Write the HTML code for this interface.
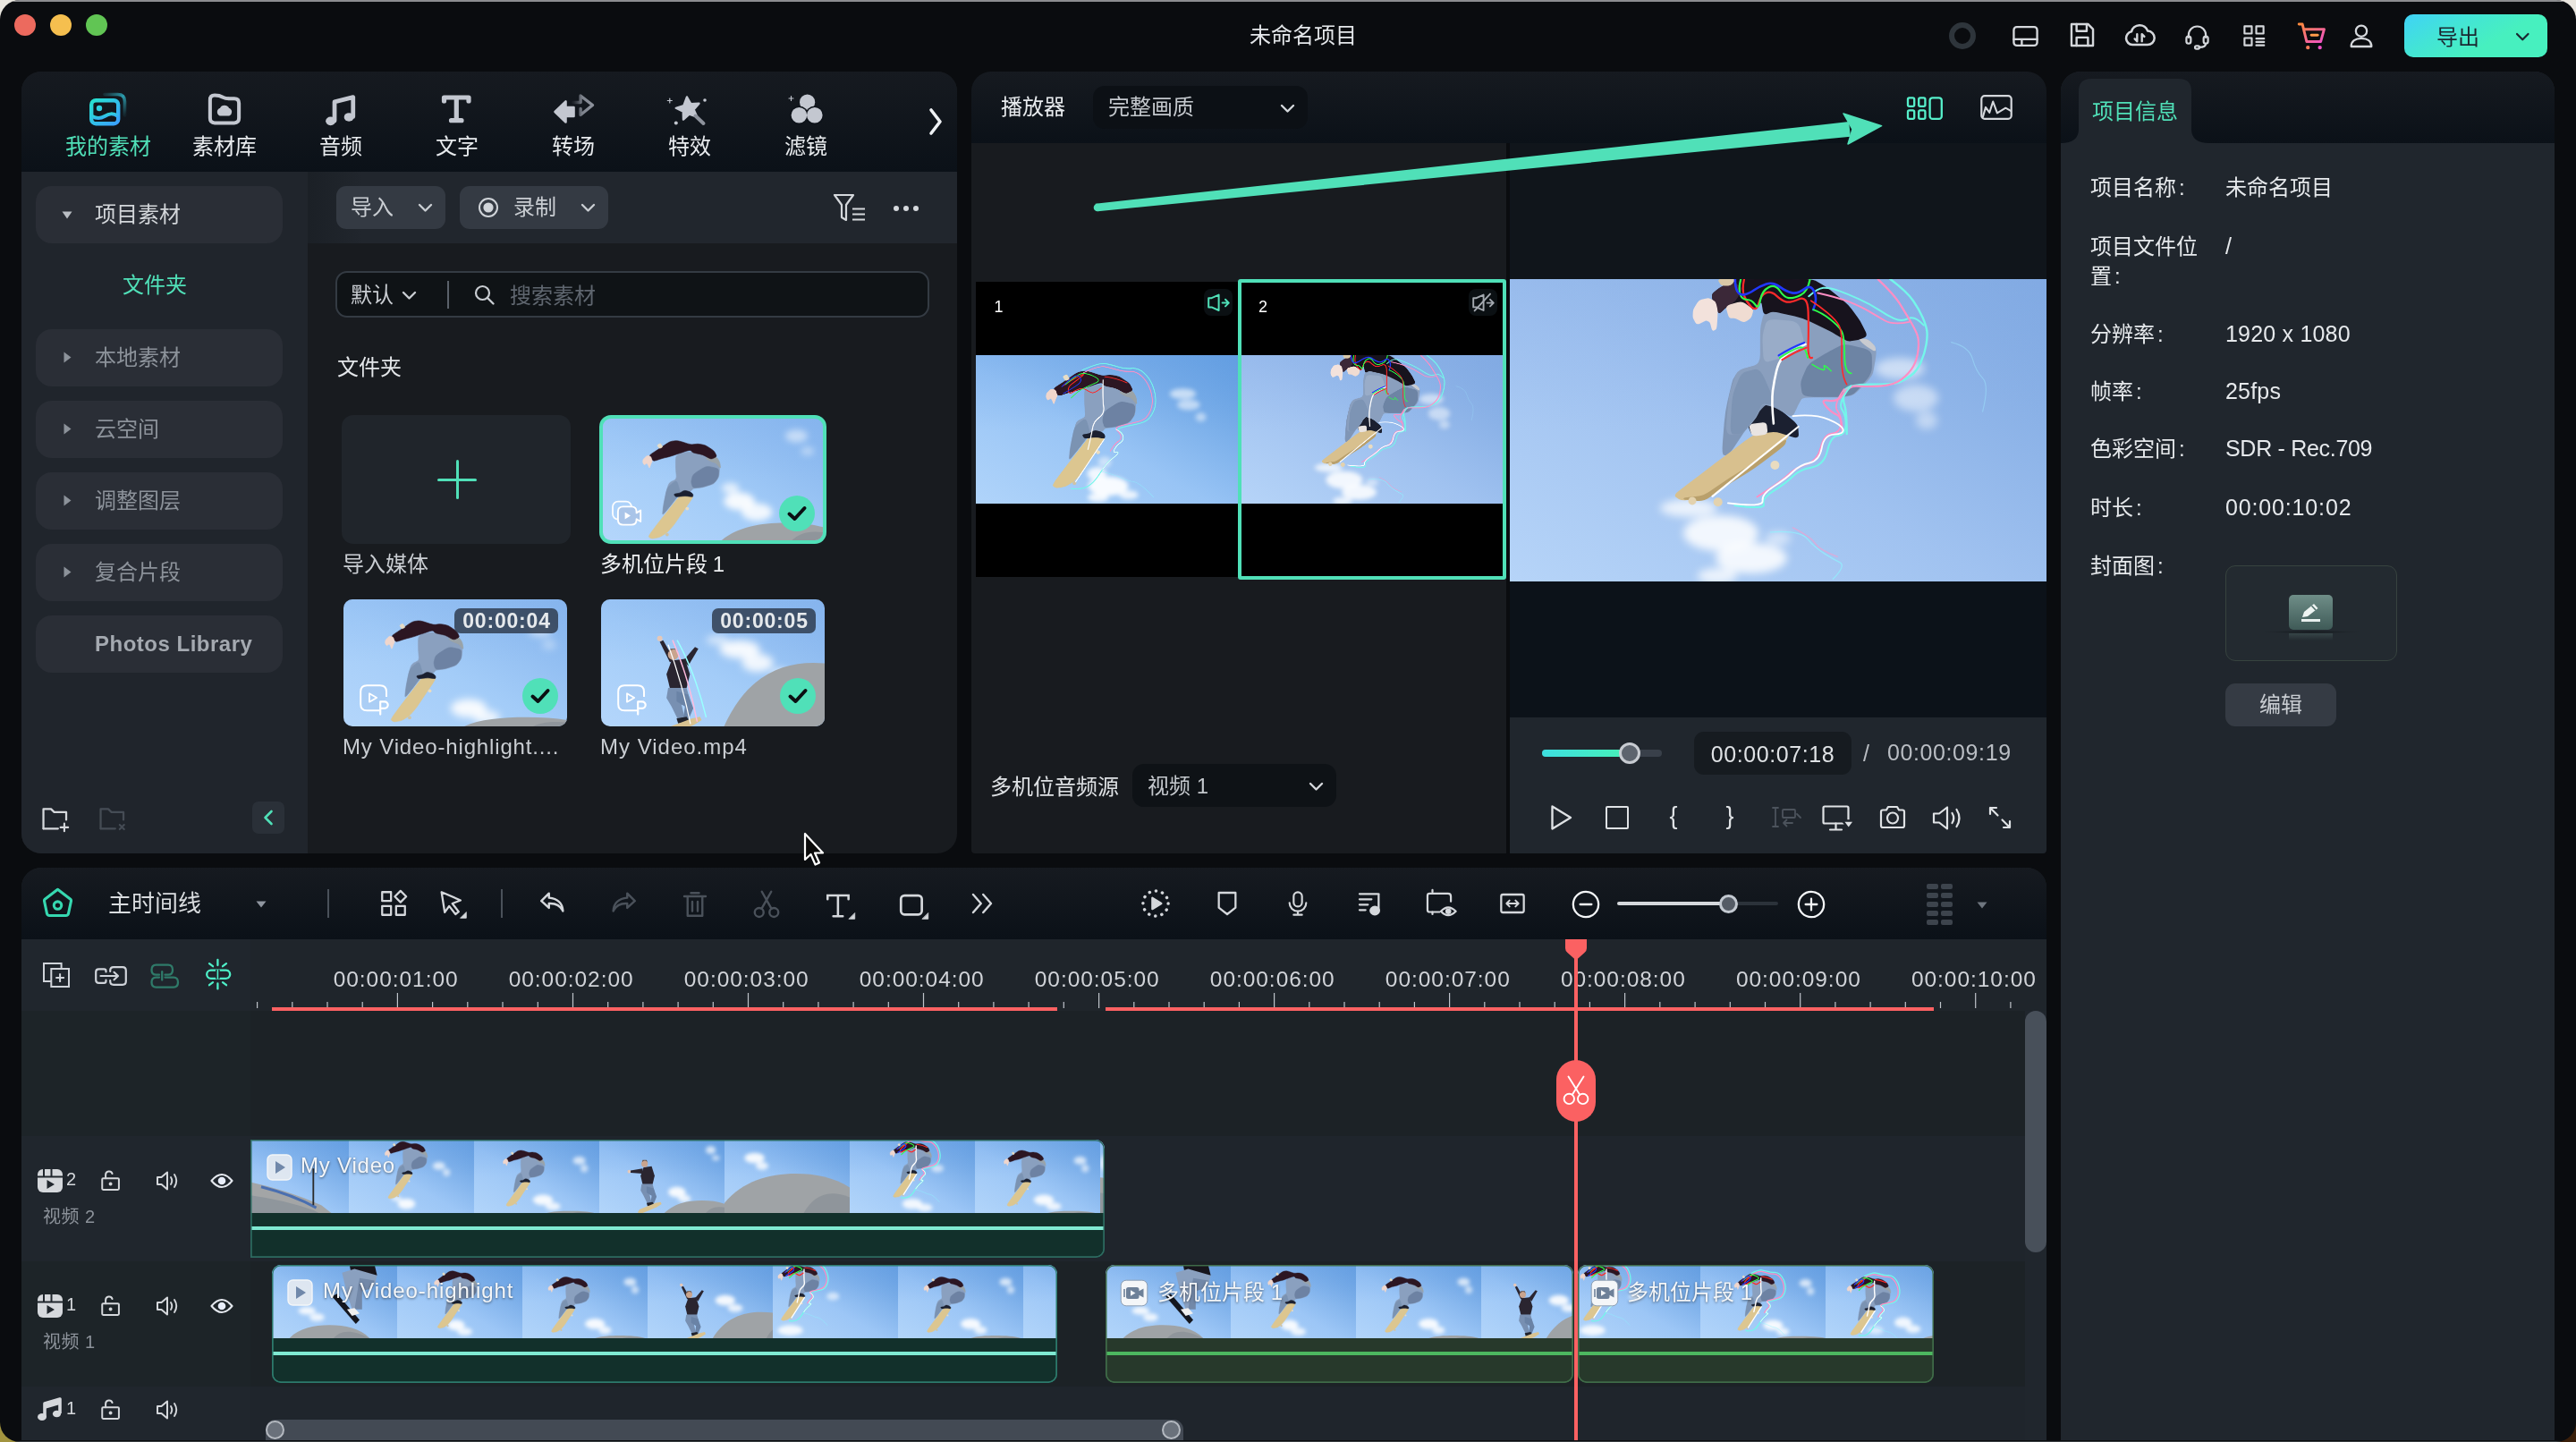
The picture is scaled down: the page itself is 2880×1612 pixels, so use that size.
<!DOCTYPE html>
<html lang="zh-CN"><head><meta charset="utf-8"><title>未命名项目</title>
<style>
html,body{margin:0;padding:0;background:#e9e6df;}
body{width:2880px;height:1612px;overflow:hidden;position:relative;font-family:"Liberation Sans","Noto Sans CJK SC",sans-serif;}
#win{position:absolute;left:0;top:0;width:2880px;height:1612px;overflow:hidden;background:#0a0c0f;border-radius:22px;will-change:transform;}
.bgc{position:absolute;width:40px;height:40px;}
#win div, #win svg{position:absolute;box-sizing:border-box;}
#win svg{overflow:visible;}
.hdr{background:linear-gradient(#161a20,#0b1118);}
</style></head>
<body>
<svg width="0" height="0" style="position:absolute">
<defs>
 <filter id="blur6" x="-20%" y="-20%" width="140%" height="140%"><feGaussianBlur stdDeviation="5"/></filter>
 <filter id="blur2" x="-20%" y="-20%" width="140%" height="140%"><feGaussianBlur stdDeviation="1.6"/></filter>
 <linearGradient id="skAh" x1="0" y1="1" x2="1" y2="0"><stop offset="0" stop-color="#b6d4f8"/><stop offset=".45" stop-color="#a0c2f0"/><stop offset="1" stop-color="#7aa5e0"/></linearGradient><linearGradient id="skAv" x1="0" y1="0" x2="0" y2="1"><stop offset="0" stop-color="#8fb3e8" stop-opacity=".35"/><stop offset=".5" stop-color="#8fb3e8" stop-opacity="0"/></linearGradient>
 <linearGradient id="skBh" x1="0" y1="1" x2="1" y2="0"><stop offset="0" stop-color="#b0d4fa"/><stop offset=".45" stop-color="#98c4f5"/><stop offset="1" stop-color="#5c99de"/></linearGradient><linearGradient id="skBv" x1="0" y1="0" x2="0" y2="1"><stop offset="0" stop-color="#6fa6e8" stop-opacity=".35"/><stop offset=".5" stop-color="#6fa6e8" stop-opacity="0"/></linearGradient>
 <linearGradient id="skTh" x1="0" y1="1" x2="1" y2="0"><stop offset="0" stop-color="#b2d5fa"/><stop offset=".45" stop-color="#9cc6f6"/><stop offset="1" stop-color="#5f9ade"/></linearGradient><linearGradient id="skTv" x1="0" y1="0" x2="0" y2="1"><stop offset="0" stop-color="#6fa6e8" stop-opacity=".35"/><stop offset=".5" stop-color="#6fa6e8" stop-opacity="0"/></linearGradient>
 <linearGradient id="skMh" x1="0" y1="1" x2="1" y2="0"><stop offset="0" stop-color="#b4d6fb"/><stop offset=".45" stop-color="#a3ccf8"/><stop offset="1" stop-color="#83b2ec"/></linearGradient><linearGradient id="skMv" x1="0" y1="0" x2="0" y2="1"><stop offset="0" stop-color="#8ab8f0" stop-opacity=".35"/><stop offset=".5" stop-color="#8ab8f0" stop-opacity="0"/></linearGradient>
 <g id="figA"><path d="M270.0 116.7 Q280.6 95.3 273.4 97.4 L261.6 100.7 Q254.4 102.8 252.0 110.4 L248.0 122.7 Q245.6 130.3 244.6 142.0 L242.9 161.3 Q241.9 173.0 252.5 151.6Z" fill="#8fa4c2" stroke="#8fa4c2" stroke-width="1.5" stroke-linejoin="round" /><path d="M244.2 136.4 Q241.4 148.1 240.4 161.1 L238.7 182.5 Q237.7 195.5 239.4 195.9 L242.2 196.4 Q243.9 196.8 250.1 187.5 L260.2 172.3 Q266.4 163.0 271.9 157.5 L280.9 148.6 Q286.4 143.1 285.0 130.7 L282.8 110.5 Q281.4 98.1 273.1 100.2 L259.6 103.5 Q251.4 105.6 248.7 117.3Z" fill="#8096b6" stroke="#8096b6" stroke-width="1.5" stroke-linejoin="round" /><path d="M186.1 243.1 Q184.0 241.7 188.8 237.9 L196.7 231.8 Q201.5 228.0 212.5 219.8 L230.4 206.2 Q241.4 198.0 249.7 191.8 L263.1 181.7 Q271.4 175.5 279.0 172.1 L291.3 166.4 Q298.9 163.0 303.0 164.0 L309.8 165.8 Q313.9 166.8 312.5 170.6 L310.3 176.7 Q308.9 180.5 299.3 188.1 L283.5 200.4 Q273.9 208.0 265.0 213.5 L250.3 222.5 Q241.4 228.0 234.6 232.8 L223.3 240.6 Q216.5 245.4 209.6 245.8 L198.4 246.3 Q191.5 246.7 189.4 245.3Z" fill="#d8c08e" stroke="#d8c08e" stroke-width="1.5" stroke-linejoin="round" /><path d="M198.4 246.1 Q191.5 245.4 198.4 244.7 L209.6 243.6 Q216.5 242.9 224.0 237.8 L236.4 229.3 Q243.9 224.2 252.8 218.7 L267.5 209.7 Q276.4 204.2 285.3 197.4 L300.0 186.1 Q308.9 179.3 308.3 181.0 L307.4 183.8 Q306.9 185.5 297.8 192.4 L283.0 203.6 Q273.9 210.5 265.0 216.0 L250.3 225.0 Q241.4 230.5 234.6 235.3 L223.3 243.1 Q216.5 247.9 209.6 247.2Z" fill="#b9a06c" stroke="#b9a06c" stroke-width="1.5" stroke-linejoin="round" /><path d="M267.8 166.1 Q266.4 163.0 272.6 156.2 L282.7 144.9 Q288.9 138.1 293.0 140.8 L299.8 145.3 Q303.9 148.1 308.7 152.2 L316.5 158.9 Q321.3 163.0 321.7 167.1 L322.2 173.9 Q322.6 178.0 315.4 175.6 L303.6 171.7 Q296.4 169.3 289.5 170.7 L278.3 172.9 Q271.4 174.3 270.0 171.2Z" fill="#1b2030" stroke="#1b2030" stroke-width="1.5" stroke-linejoin="round" /><path d="M268.7 166.3 Q267.7 163.0 272.8 162.3 L281.3 161.2 Q286.4 160.5 286.7 163.9 L287.3 169.6 Q287.6 173.0 283.1 173.6 L275.9 174.4 Q271.4 175.0 270.4 171.7Z" fill="#e9e4e2" stroke="#e9e4e2" stroke-width="1.5" stroke-linejoin="round" /><path d="M283.3 43.7 Q284.3 39.2 287.1 38.2 L291.6 36.4 Q294.3 35.4 303.6 37.5 L318.7 40.8 Q328.0 42.9 336.6 47.0 L350.6 53.8 Q359.2 57.9 364.3 61.0 L372.8 66.0 Q377.9 69.1 381.7 68.4 L387.9 67.3 Q391.7 66.6 394.1 67.0 L398.0 67.5 Q400.4 67.9 402.5 70.0 L405.8 73.3 Q407.9 75.4 408.2 77.5 L408.8 80.8 Q409.1 82.9 408.1 89.1 L406.4 99.1 Q405.4 105.3 404.0 107.4 L401.8 110.7 Q400.4 112.8 395.9 117.3 L388.7 124.5 Q384.2 129.0 380.8 129.7 L375.1 130.8 Q371.7 131.5 359.4 131.5 L339.1 131.5 Q326.8 131.5 325.4 133.9 L323.2 137.9 Q321.8 140.3 320.1 144.1 L317.2 150.2 Q315.5 154.0 310.4 150.9 L301.9 145.9 Q296.8 142.8 292.7 141.8 L285.9 140.0 Q281.8 139.0 280.1 143.1 L277.3 149.9 Q275.6 154.0 271.1 159.2 L263.9 167.8 Q259.4 173.0 254.6 173.0 L246.7 173.0 Q241.9 173.0 242.9 161.3 L244.6 142.0 Q245.6 130.3 248.0 122.7 L252.0 110.4 Q254.4 102.8 261.6 100.7 L273.4 97.4 Q280.6 95.3 280.6 84.3 L280.6 66.4 Q280.6 55.4 281.6 50.9Z" fill="#8a9fbe" stroke="#8a9fbe" stroke-width="1.5" stroke-linejoin="round" /><path d="M331.8 100.8 Q334.2 95.3 341.1 91.2 L352.3 84.5 Q359.2 80.4 363.3 78.3 L370.1 75.0 Q374.2 72.9 382.4 75.0 L395.9 78.3 Q404.1 80.4 404.1 87.2 L404.1 98.5 Q404.1 105.3 398.6 111.7 L389.7 122.0 Q384.2 128.4 380.8 129.1 L375.1 130.2 Q371.7 130.9 359.7 130.9 L340.0 130.9 Q328.0 130.9 327.3 126.6 L326.2 119.6 Q325.5 115.3 327.9 109.8Z" fill="#647b9c" stroke="#647b9c" stroke-width="1.5" stroke-linejoin="round" opacity=".75"/><path d="M286.7 50.2 Q288.1 45.4 297.4 46.1 L312.5 47.2 Q321.8 47.9 323.9 54.8 L327.2 66.0 Q329.3 72.9 321.7 77.0 L309.4 83.8 Q301.8 87.9 297.0 89.2 L289.1 91.5 Q284.3 92.8 284.0 84.6 L283.4 71.1 Q283.1 62.9 284.5 58.1Z" fill="#9db0cb" stroke="#9db0cb" stroke-width="1.5" stroke-linejoin="round" opacity=".8"/><path d="M256.6 112.2 Q259.4 105.3 264.9 103.9 L273.8 101.7 Q279.3 100.3 284.1 111.3 L292.0 129.3 Q296.8 140.3 292.7 139.8 L285.9 138.9 Q281.8 138.4 279.7 142.7 L276.4 149.7 Q274.3 154.0 270.2 159.1 L263.5 167.6 Q259.4 172.7 256.0 172.7 L250.3 172.7 Q246.9 172.7 247.6 161.0 L248.7 142.0 Q249.4 130.3 252.2 123.4Z" fill="#7890b0" stroke="#7890b0" stroke-width="1.5" stroke-linejoin="round" opacity=".7"/><path d="M392.1 68.3 Q390.4 66.6 393.1 67.0 L397.6 67.5 Q400.4 67.9 402.5 70.0 L405.8 73.3 Q407.9 75.4 408.1 76.8 L408.3 79.0 Q408.5 80.4 405.2 78.3 L399.9 75.0 Q396.6 72.9 394.9 71.2Z" fill="#c9cbd0" stroke="#c9cbd0" stroke-width="1.5" stroke-linejoin="round" /><path d="M227.4 22.5 Q225.7 18.0 228.1 15.9 L232.0 12.6 Q234.4 10.5 238.5 8.4 L245.3 5.1 Q249.4 3.0 250.1 2.2 L251.2 0.9 Q251.9 0.1 275.6 0.1 L314.3 0.1 Q338.0 0.1 343.1 3.3 L351.6 8.5 Q356.7 11.7 362.5 16.5 L372.1 24.4 Q377.9 29.2 381.7 34.3 L387.9 42.8 Q391.7 47.9 393.7 52.2 L397.1 59.2 Q399.1 63.5 396.4 64.5 L391.9 66.3 Q389.2 67.3 386.1 67.8 L381.0 68.6 Q377.9 69.1 372.8 66.0 L364.3 61.0 Q359.2 57.9 350.6 53.8 L336.6 47.0 Q328.0 42.9 318.7 40.8 L303.6 37.5 Q294.3 35.4 291.6 36.4 L287.1 38.2 Q284.3 39.2 283.6 35.1 L282.5 28.3 Q281.8 24.2 279.1 26.9 L274.6 31.5 Q271.8 34.2 268.4 31.8 L262.8 27.8 Q259.4 25.4 254.6 26.8 L246.7 29.0 Q241.9 30.4 239.8 32.5 L236.5 35.8 Q234.4 37.9 233.7 36.9 L232.6 35.2 Q231.9 34.2 230.2 29.7Z" fill="#17131d" stroke="#17131d" stroke-width="1.5" stroke-linejoin="round" /><path d="M227.4 22.5 Q225.7 18.0 228.1 15.9 L232.0 12.6 Q234.4 10.5 238.5 8.4 L245.3 5.1 Q249.4 3.0 252.2 5.1 L256.6 8.4 Q259.4 10.5 257.3 14.3 L254.0 20.4 Q251.9 24.2 249.2 25.9 L244.7 28.7 Q241.9 30.4 239.8 32.5 L236.5 35.8 Q234.4 37.9 233.7 36.9 L232.6 35.2 Q231.9 34.2 230.2 29.7Z" fill="#3b2838" stroke="#3b2838" stroke-width="1.5" stroke-linejoin="round" /><path d="M242.9 33.8 Q241.9 30.4 246.7 29.0 L254.6 26.8 Q259.4 25.4 262.8 27.8 L268.4 31.8 Q271.8 34.2 271.1 36.6 L270.0 40.5 Q269.3 42.9 267.3 44.3 L263.9 46.5 Q261.9 47.9 259.1 46.5 L254.7 44.3 Q251.9 42.9 250.2 42.9 L247.3 42.9 Q245.6 42.9 244.6 39.5Z" fill="#f0dcd2" stroke="#f0dcd2" stroke-width="1.5" stroke-linejoin="round" /><path d="M234.2 2.4 Q233.2 0.7 237.0 0.5 L243.1 0.3 Q246.9 0.1 248.3 0.1 L250.5 0.1 Q251.9 0.1 250.5 1.9 L248.3 4.9 Q246.9 6.7 244.2 6.7 L239.7 6.7 Q236.9 6.7 235.9 5.0Z" fill="#d9c9a8" stroke="#d9c9a8" stroke-width="1.5" stroke-linejoin="round" /><path d="M205.5 36.6 Q205.7 34.2 207.4 31.5 L210.2 26.9 Q211.9 24.2 214.7 23.5 L219.2 22.4 Q221.9 21.7 224.0 22.7 L227.3 24.4 Q229.4 25.4 230.1 28.1 L231.2 32.6 Q231.9 35.4 231.6 40.9 L231.0 49.9 Q230.7 55.4 229.7 55.9 L227.9 56.8 Q226.9 57.3 226.2 54.7 L225.1 50.5 Q224.4 47.9 223.0 47.2 L220.8 46.1 Q219.4 45.4 216.7 46.8 L212.2 49.0 Q209.4 50.4 208.2 48.3 L206.3 45.0 Q205.1 42.9 205.3 40.5Z" fill="#f3e2dc" stroke="#f3e2dc" stroke-width="1.5" stroke-linejoin="round" /><circle cx="296.4" cy="208.0" r="5" fill="#eadcc0"/><circle cx="232.7" cy="249.2" r="5" fill="#e3d2ae"/><circle cx="204.0" cy="247.9" r="4.5" fill="#e3d2ae"/></g><g id="neonA" fill="none" stroke-linejoin="round" stroke-linecap="round"><path d="M425.4 0.1 Q444.1 14.2 451.0 24.2 Q457.8 34.2 461.6 43.0 Q465.3 51.7 466.2 57.3 Q467.2 62.9 465.6 72.9 Q464.0 82.9 459.6 92.8 Q455.3 102.8 448.5 107.8 Q441.6 112.8 435.4 115.3 Q429.1 117.8 402.9 117.8 Q376.7 117.8 374.2 125.3 Q371.7 132.8 374.2 140.9 Q376.7 149.0 376.7 173.0" stroke="#74f6ea" stroke-width="2.4" /><path d="M334.2 19.2 Q344.2 10.5 350.4 9.8 Q356.7 9.2 367.3 12.9 Q377.9 16.7 390.4 22.3 Q402.9 27.9 412.2 34.1 Q421.6 40.4 429.7 44.1 Q437.8 47.9 445.3 44.1 Q452.8 40.4 462.8 51.7" stroke="#74f6ea" stroke-width="2.0" /><path d="M411.6 0.1 Q429.1 16.7 435.4 26.7 Q441.6 36.7 447.2 46.0 Q452.8 55.4 455.3 61.7 Q457.8 67.9 456.6 79.1 Q455.3 90.3 451.0 97.8 Q446.6 105.3 437.9 112.2 Q429.1 119.1 412.9 119.7 Q396.6 120.3 387.9 119.7 Q379.2 119.1 372.9 128.4 Q366.7 137.8 356.7 135.9 Q346.7 134.0 352.9 141.5 Q359.2 149.0 365.4 151.5 Q371.7 154.0 371.7 173.0" stroke="#ff8ec4" stroke-width="2.2" /><path d="M344.2 15.5 Q366.7 20.5 379.2 25.4 Q391.7 30.4 400.4 35.4 Q409.1 40.4 418.5 46.0 Q427.9 51.7 446.6 47.9" stroke="#ff8ec4" stroke-width="1.8" /><path d="M381.3 119.4 Q366.3 138.1 371.3 145.6 Q376.3 153.1 375.6 163.7 Q375.0 174.3 366.9 174.9 Q358.8 175.5 355.1 191.8 Q351.3 208.0 337.6 210.5 Q323.8 213.0 316.4 220.5 Q308.9 228.0 295.1 236.7 Q281.4 245.4 283.9 251.6 Q286.4 257.9 251.4 252.9" stroke="#74f6ea" stroke-width="2.0" /><path d="M373.8 123.1 Q361.3 140.6 366.3 147.4 Q371.3 154.3 370.1 163.1 Q368.8 171.8 360.1 172.7 Q351.3 173.5 347.6 188.5 Q343.8 203.5 331.4 207.2 Q318.9 211.0 311.4 218.5 Q303.9 226.0 276.4 243.4" stroke="#ff8ec4" stroke-width="1.8" /><path d="M316.4 153.1 Q341.3 150.6 356.3 156.8 Q371.3 163.0 372.6 168.0 Q373.8 173.0 362.6 173.7 Q351.3 174.3 348.8 188.7 Q346.3 203.0 335.1 205.5 Q323.8 208.0 316.4 215.5 Q308.9 223.0 295.1 231.7 Q281.4 240.4 282.6 247.9 Q283.9 255.4 243.9 250.4" stroke="#ffffff" stroke-width="1.8" /><path d="M330.5 72.9 Q309.3 82.9 304.9 87.8 Q300.5 92.8 298.1 102.8 Q295.6 112.8 294.0 124.7 Q292.4 136.5 294.9 161.5" stroke="#ffffff" stroke-width="2.6" /><path d="M322.6 165.0 L226.5 242.9" stroke="#ffffff" stroke-width="2.2" /><path d="M261.9 0.5 Q259.4 11.7 261.9 18.5 Q264.4 25.4 270.0 31.1 Q275.6 36.7 278.1 27.4 Q280.6 18.0 286.2 15.5 Q291.8 13.0 298.1 18.6 Q304.3 24.2 308.6 25.4 Q313.0 26.7 323.0 22.4 Q333.0 18.0 333.6 36.7 Q334.2 55.4 333.6 72.8 Q333.0 90.3 338.0 87.9" stroke="#ff2a2a" stroke-width="2.2" /><path d="M258.1 0.5 Q255.6 10.5 257.5 16.8 Q259.4 23.0 265.0 23.0 Q270.6 23.0 274.4 28.6 Q278.1 34.2 280.0 23.6 Q281.8 13.0 289.3 9.2 Q296.8 5.5 301.8 13.0 Q306.8 20.5 311.8 21.1 Q316.8 21.7 324.9 17.9 Q333.0 14.2 335.5 0.5" stroke="#2dff4a" stroke-width="2.2" /><path d="M251.9 0.5 Q251.9 9.2 254.4 13.6 Q256.9 18.0 261.9 17.4 Q266.9 16.7 273.1 12.3 Q279.3 8.0 286.8 5.5 Q294.3 3.0 301.8 8.6 Q309.3 14.2 315.6 15.4 Q321.8 16.7 329.2 11.1 Q336.7 5.5 340.4 14.2 Q344.2 23.0 339.2 34.2" stroke="#2038ff" stroke-width="2.6" /><path d="M339.2 34.2 Q349.2 37.9 357.9 44.8 Q366.7 51.7 370.4 57.3 Q374.2 62.9 374.2 84.1 Q374.2 105.3 381.7 105.3" stroke="#2dff4a" stroke-width="1.8" /><path d="M336.7 24.2 Q346.7 30.4 355.4 37.9 Q364.2 45.4 367.9 51.6 Q371.7 57.9 371.0 82.8 Q370.4 107.8 376.7 117.8" stroke="#ff2a2a" stroke-width="1.6" /><path d="M301.8 87.9 Q315.5 79.1 323.0 76.6 Q330.5 74.1 333.0 87.9" stroke="#2dff4a" stroke-width="2" /><path d="M300.5 85.4 Q314.3 76.6 329.3 71.0" stroke="#2038ff" stroke-width="2" /><path d="M304.3 90.3 Q318.0 81.6 331.8 76.6" stroke="#ff2a2a" stroke-width="1.8" /><path d="M338.0 95.3 Q354.2 105.3 351.7 99.0 Q349.2 92.8 359.2 102.8" stroke="#2dff4a" stroke-width="1.4" /><path d="M291.4 282.9 Q323.8 280.4 332.6 290.4 Q341.3 300.4 351.3 306.6 Q361.3 312.9 368.8 316.6 Q376.3 320.3 361.3 335.3" stroke="#8ef4ff" stroke-width="1.3" opacity=".7"/><path d="M316.4 277.9 Q336.3 287.9 341.3 295.4 Q346.3 302.9 366.3 310.4" stroke="#ff9ac8" stroke-width="1.3" opacity=".6"/><path d="M493.6 70.7 Q513.6 75.7 517.4 89.4 Q521.1 103.1 528.6 110.6 Q536.1 118.1 528.6 148.1" stroke="#9fe8ff" stroke-width="1.2" opacity=".45"/></g>
 <g id="figB"><path d="M178.5 298.7 Q176.0 297.3 177.8 294.1 L180.6 289.0 Q182.4 285.8 188.8 277.4 L199.1 263.7 Q205.5 255.3 213.2 245.5 L225.9 229.4 Q233.6 219.6 240.6 210.5 L252.2 195.6 Q259.2 186.5 263.4 183.0 L270.3 177.3 Q274.5 173.8 278.0 174.5 L283.8 175.7 Q287.3 176.4 289.4 179.9 L292.9 185.6 Q295.0 189.1 292.9 192.6 L289.4 198.3 Q287.3 201.8 281.0 210.9 L270.6 225.8 Q264.3 234.9 258.7 243.3 L249.4 257.0 Q243.8 265.4 238.9 271.0 L230.8 280.2 Q225.9 285.8 220.3 289.3 L211.1 295.0 Q205.5 298.5 199.9 299.5 L190.6 301.3 Q185.0 302.3 182.5 300.9Z" fill="#dcc690" stroke="#dcc690" stroke-width="1.5" stroke-linejoin="round" /><path d="M249.0 88.8 Q249.0 79.7 251.8 77.6 L256.4 74.1 Q259.2 72.0 266.9 70.6 L279.6 68.3 Q287.3 66.9 296.5 69.0 L311.4 72.5 Q320.6 74.6 326.9 78.1 L337.3 83.8 Q343.6 87.3 347.1 90.1 L352.9 94.7 Q356.4 97.5 359.2 100.3 L363.8 104.9 Q366.6 107.7 365.9 115.4 L364.8 127.9 Q364.1 135.6 360.6 140.5 L354.8 148.6 Q351.3 153.5 342.9 156.3 L329.0 160.8 Q320.6 163.6 313.6 164.3 L302.0 165.5 Q295.0 166.2 293.6 168.3 L291.3 171.7 Q289.9 173.8 284.3 173.8 L275.0 173.8 Q269.4 173.8 266.6 177.3 L262.0 183.0 Q259.2 186.5 257.1 187.2 L253.6 188.4 Q251.5 189.1 246.6 196.1 L238.5 207.5 Q233.6 214.5 228.0 221.5 L218.7 233.0 Q213.1 240.0 213.8 233.0 L215.0 221.5 Q215.7 214.5 217.8 204.0 L221.3 186.9 Q223.4 176.4 225.5 169.4 L228.9 157.9 Q231.0 150.9 236.6 148.1 L245.9 143.5 Q251.5 140.7 250.8 133.0 L249.7 120.4 Q249.0 112.7 249.0 103.6Z" fill="#8aa0bf" stroke="#8aa0bf" stroke-width="1.5" stroke-linejoin="round" /><path d="M293.6 133.6 Q295.0 128.0 304.8 121.7 L321.0 111.4 Q330.8 105.1 340.0 107.2 L354.9 110.6 Q364.1 112.7 363.7 119.0 L363.2 129.3 Q362.8 135.6 359.6 140.2 L354.5 147.6 Q351.3 152.2 342.9 155.0 L329.0 159.6 Q320.6 162.4 313.6 163.1 L302.0 164.2 Q295.0 164.9 293.6 160.4 L291.3 152.9 Q289.9 148.4 291.3 142.8Z" fill="#64799a" stroke="#64799a" stroke-width="1.5" stroke-linejoin="round" opacity=".75"/><path d="M223.5 176.2 Q225.9 163.6 232.9 158.0 L244.5 148.9 Q251.5 143.3 254.3 153.1 L258.9 169.1 Q261.7 178.9 254.0 188.7 L241.3 204.7 Q233.6 214.5 228.3 220.8 L219.7 231.1 Q214.4 237.4 215.1 229.7 L216.3 217.2 Q217.0 209.5 219.4 196.9Z" fill="#7890b0" stroke="#7890b0" stroke-width="1.5" stroke-linejoin="round" opacity=".8"/><path d="M245.2 183.6 Q243.8 181.5 248.0 180.8 L255.0 179.6 Q259.2 178.9 262.7 176.8 L268.5 173.4 Q272.0 171.3 276.2 172.3 L283.1 174.1 Q287.3 175.1 289.4 176.9 L292.9 179.7 Q295.0 181.5 295.0 183.6 L295.0 187.0 Q295.0 189.1 289.4 188.4 L280.1 187.2 Q274.5 186.5 267.5 187.2 L256.0 188.4 Q249.0 189.1 247.6 187.0Z" fill="#1b2030" stroke="#1b2030" stroke-width="1.5" stroke-linejoin="round" /><path d="M331.8 86.8 Q328.3 84.7 333.2 83.3 L341.3 81.1 Q346.2 79.7 349.7 80.4 L355.5 81.5 Q359.0 82.2 361.1 85.7 L364.5 91.4 Q366.6 94.9 367.3 99.8 L368.5 107.8 Q369.2 112.7 365.7 108.5 L359.9 101.7 Q356.4 97.5 352.2 96.1 L345.3 93.8 Q341.1 92.4 337.6 90.3Z" fill="#9aa3a8" stroke="#9aa3a8" stroke-width="1.5" stroke-linejoin="round" /><path d="M179.6 78.2 Q178.6 75.8 184.6 72.0 L194.3 65.6 Q200.3 61.8 209.5 55.5 L224.4 45.2 Q233.6 38.9 239.2 38.2 L248.5 37.1 Q254.1 36.4 263.9 39.5 L280.1 44.7 Q289.9 47.8 294.8 47.1 L302.9 46.0 Q307.8 45.3 313.4 46.3 L322.7 48.1 Q328.3 49.1 334.6 53.3 L345.0 60.2 Q351.3 64.4 353.4 68.6 L356.9 75.5 Q359.0 79.7 354.8 81.8 L347.8 85.2 Q343.6 87.3 337.3 83.8 L326.9 78.1 Q320.6 74.6 313.6 73.2 L302.0 70.9 Q295.0 69.5 292.9 67.4 L289.4 63.9 Q287.3 61.8 278.9 64.6 L265.0 69.2 Q256.6 72.0 250.3 74.1 L239.9 77.6 Q233.6 79.7 228.0 81.1 L218.7 83.3 Q213.1 84.7 206.8 86.8 L196.4 90.3 Q190.1 92.4 188.0 90.3 L184.5 86.8 Q182.4 84.7 181.4 82.3Z" fill="#2c1622" stroke="#2c1622" stroke-width="1.5" stroke-linejoin="round" /><path d="M161.6 89.4 Q162.0 87.3 164.8 84.5 L169.4 79.9 Q172.2 77.1 175.0 77.8 L179.6 79.0 Q182.4 79.7 183.5 83.2 L185.2 88.9 Q186.3 92.4 185.2 94.5 L183.5 97.9 Q182.4 100.0 181.4 103.2 L179.6 108.3 Q178.6 111.5 177.9 109.7 L176.7 106.9 Q176.0 105.1 175.0 103.0 L173.2 99.6 Q172.2 97.5 170.1 98.9 L166.6 101.2 Q164.5 102.6 163.5 100.5 L161.7 97.0 Q160.7 94.9 161.1 92.8Z" fill="#f0d6cc" stroke="#f0d6cc" stroke-width="1.5" stroke-linejoin="round" /><path d="M200.9 51.5 Q199.1 49.1 201.5 47.7 L205.6 45.4 Q208.0 44.0 209.8 46.8 L212.6 51.4 Q214.4 54.2 212.0 55.2 L207.9 57.0 Q205.5 58.0 203.7 55.6Z" fill="#e6dcc6" stroke="#e6dcc6" stroke-width="1.5" stroke-linejoin="round" /><circle cx="279.7" cy="220.9" r="4.5" fill="#eadcc0"/><circle cx="225.9" cy="290.9" r="4.5" fill="#cfc3a5"/></g><g id="neonB"><g fill="none" stroke-linejoin="round" stroke-linecap="round"><path d="M243.8 33.8 Q282.2 17.3 295.0 19.2 Q307.8 21.1 324.5 26.2 Q341.1 31.3 356.5 30.1 Q371.8 28.8 384.6 40.2 Q397.4 51.7 403.8 67.0 Q410.1 82.2 411.4 97.5 Q412.7 112.7 407.6 125.4 Q402.5 138.2 394.8 145.8 Q387.1 153.5 366.6 157.3 Q346.2 161.1 333.4 164.9 Q320.6 168.7 328.2 172.6 Q335.9 176.4 337.2 185.3 Q338.5 194.2 330.9 199.3 Q323.2 204.4 318.0 213.3 Q312.9 222.2 320.6 220.9 Q328.3 219.6 324.5 224.7 Q320.6 229.8 311.6 236.2 Q302.7 242.5 296.3 251.4 Q289.9 260.4 279.6 275.6 Q269.4 290.9 256.6 298.5 Q243.8 306.2 218.2 303.6" stroke="#74f6ea" stroke-width="2.2" /><path d="M246.4 40.2 Q282.2 23.7 295.0 26.2 Q307.8 28.8 323.1 33.2 Q338.5 37.7 352.6 37.0 Q366.6 36.4 378.1 46.6 Q389.7 56.8 396.1 70.8 Q402.5 84.7 403.8 98.7 Q405.0 112.7 400.6 124.2 Q396.1 135.6 389.1 142.6 Q382.0 149.6 362.8 153.4 Q343.6 157.3 330.2 161.1 Q316.8 164.9 323.8 171.9 Q330.8 178.9 332.1 185.2 Q333.4 191.6 325.7 196.7 Q318.0 201.8 307.8 218.4" stroke="#ff8ec4" stroke-width="2.0" /><path d="M291.2 56.8 Q289.9 100.0 292.4 116.5 Q295.0 133.1 282.2 142.0 Q269.4 150.9 266.9 167.4 Q264.3 184.0 256.6 214.5" stroke="#ffffff" stroke-width="2.4" /><path d="M293.7 191.6 L228.5 288.3" stroke="#ffffff" stroke-width="2.2" /><path d="M320.6 168.7 Q335.9 176.4 337.2 185.3 Q338.5 194.2 330.9 199.3 Q323.2 204.4 318.0 213.3 Q312.9 222.2 320.6 220.9 Q328.3 219.6 324.5 224.7 Q320.6 229.8 311.6 236.2 Q302.7 242.5 289.9 260.4" stroke="#ffffff" stroke-width="1.4" /><path d="M200.3 69.5 Q218.2 56.8 236.1 47.8 Q254.1 38.9 241.3 49.1 Q228.5 59.3 219.6 65.7 Q210.6 72.0 211.8 80.9 Q213.1 89.8 222.1 84.1 Q231.0 78.4 238.7 76.5 Q246.4 74.6 252.8 79.0 Q259.2 83.5 265.6 85.4 Q272.0 87.3 287.3 74.6" stroke="#ff2a2a" stroke-width="2" /><path d="M205.5 66.9 Q223.4 51.7 234.9 44.7 Q246.4 37.7 268.1 47.2 Q289.9 56.8 274.5 63.1 Q259.2 69.5 246.4 75.8 Q233.6 82.2 218.2 97.5" stroke="#2dff4a" stroke-width="1.8" /><path d="M196.5 72.0 Q213.1 56.8 223.3 49.8 Q233.6 42.8 238.7 51.0 Q243.8 59.3 233.6 66.9 Q223.4 74.6 200.3 87.3" stroke="#2038ff" stroke-width="1.8" /><path d="M295.0 49.1 Q320.6 51.7 346.2 63.1" stroke="#ff2a2a" stroke-width="1.8" /><path d="M289.9 265.4 Q320.6 273.1 333.4 279.5 Q346.2 285.8 361.5 288.4 Q376.9 290.9 407.6 324.0" stroke="#8ef4ff" stroke-width="1.2" opacity=".6"/></g></g><g id="neonBm"><g fill="none" stroke-linejoin="round" stroke-linecap="round"><path d="M243.8 33.8 Q282.2 17.3 295.0 19.2 Q307.8 21.1 324.5 26.2 Q341.1 31.3 356.5 30.1 Q371.8 28.8 384.6 40.2 Q397.4 51.7 403.8 67.0 Q410.1 82.2 411.4 97.5 Q412.7 112.7 407.6 125.4 Q402.5 138.2 394.8 145.8 Q387.1 153.5 366.6 157.3 Q346.2 161.1 333.4 164.9 Q320.6 168.7 328.2 172.6 Q335.9 176.4 337.2 185.3 Q338.5 194.2 330.9 199.3 Q323.2 204.4 318.0 213.3 Q312.9 222.2 320.6 220.9 Q328.3 219.6 324.5 224.7 Q320.6 229.8 311.6 236.2 Q302.7 242.5 296.3 251.4 Q289.9 260.4 279.6 275.6 Q269.4 290.9 256.6 298.5 Q243.8 306.2 218.2 303.6" stroke="#74f6ea" stroke-width="5.7" /><path d="M246.4 40.2 Q282.2 23.7 295.0 26.2 Q307.8 28.8 323.1 33.2 Q338.5 37.7 352.6 37.0 Q366.6 36.4 378.1 46.6 Q389.7 56.8 396.1 70.8 Q402.5 84.7 403.8 98.7 Q405.0 112.7 400.6 124.2 Q396.1 135.6 389.1 142.6 Q382.0 149.6 362.8 153.4 Q343.6 157.3 330.2 161.1 Q316.8 164.9 323.8 171.9 Q330.8 178.9 332.1 185.2 Q333.4 191.6 325.7 196.7 Q318.0 201.8 307.8 218.4" stroke="#ff8ec4" stroke-width="5.2" /><path d="M291.2 56.8 Q289.9 100.0 292.4 116.5 Q295.0 133.1 282.2 142.0 Q269.4 150.9 266.9 167.4 Q264.3 184.0 256.6 214.5" stroke="#ffffff" stroke-width="6.2" /><path d="M293.7 191.6 L228.5 288.3" stroke="#ffffff" stroke-width="5.7" /><path d="M320.6 168.7 Q335.9 176.4 337.2 185.3 Q338.5 194.2 330.9 199.3 Q323.2 204.4 318.0 213.3 Q312.9 222.2 320.6 220.9 Q328.3 219.6 324.5 224.7 Q320.6 229.8 311.6 236.2 Q302.7 242.5 289.9 260.4" stroke="#ffffff" stroke-width="3.6" /><path d="M200.3 69.5 Q218.2 56.8 236.1 47.8 Q254.1 38.9 241.3 49.1 Q228.5 59.3 219.6 65.7 Q210.6 72.0 211.8 80.9 Q213.1 89.8 222.1 84.1 Q231.0 78.4 238.7 76.5 Q246.4 74.6 252.8 79.0 Q259.2 83.5 265.6 85.4 Q272.0 87.3 287.3 74.6" stroke="#ff2a2a" stroke-width="5.2" /><path d="M205.5 66.9 Q223.4 51.7 234.9 44.7 Q246.4 37.7 268.1 47.2 Q289.9 56.8 274.5 63.1 Q259.2 69.5 246.4 75.8 Q233.6 82.2 218.2 97.5" stroke="#2dff4a" stroke-width="4.7" /><path d="M196.5 72.0 Q213.1 56.8 223.3 49.8 Q233.6 42.8 238.7 51.0 Q243.8 59.3 233.6 66.9 Q223.4 74.6 200.3 87.3" stroke="#2038ff" stroke-width="4.7" /><path d="M295.0 49.1 Q320.6 51.7 346.2 63.1" stroke="#ff2a2a" stroke-width="4.7" /><path d="M289.9 265.4 Q320.6 273.1 333.4 279.5 Q346.2 285.8 361.5 288.4 Q376.9 290.9 407.6 324.0" stroke="#8ef4ff" stroke-width="3.1" opacity=".6"/></g></g>
</defs>

<symbol id="picA" viewBox="0 0 600 338" preserveAspectRatio="none">
 <rect width="600" height="338" fill="url(#skAh)"/><rect width="600" height="338" fill="url(#skAv)"/>
 <g filter="url(#blur6)" fill="#fff">
  <ellipse cx="200" cy="256" rx="32" ry="10" opacity=".75"/><ellipse cx="236" cy="284" rx="42" ry="20" opacity=".85"/>
  <ellipse cx="270" cy="312" rx="40" ry="17" opacity=".85"/><ellipse cx="232" cy="332" rx="22" ry="9" opacity=".75"/><ellipse cx="300" cy="290" rx="14" ry="8" opacity=".5"/>
  <ellipse cx="436" cy="100" rx="28" ry="12" opacity=".55"/><ellipse cx="454" cy="133" rx="25" ry="15" opacity=".5"/><ellipse cx="466" cy="158" rx="12" ry="10" opacity=".45"/>
 </g>
 <use href="#figA"/><use href="#neonA"/>
</symbol>
<symbol id="picB" viewBox="0 0 600 338" preserveAspectRatio="none">
 <rect width="600" height="338" fill="url(#skBh)"/><rect width="600" height="338" fill="url(#skBv)"/>
 <g filter="url(#blur6)" fill="#fff">
  <ellipse cx="303" cy="298" rx="46" ry="22" opacity=".92"/><ellipse cx="277" cy="270" rx="22" ry="15" opacity=".85"/><ellipse cx="295" cy="243" rx="15" ry="12" opacity=".5"/>
  <ellipse cx="280" cy="324" rx="24" ry="10" opacity=".85"/><ellipse cx="350" cy="318" rx="22" ry="10" opacity=".8"/>
  <ellipse cx="474" cy="88" rx="30" ry="12" opacity=".6"/><ellipse cx="487" cy="113" rx="26" ry="12" opacity=".55"/><ellipse cx="515" cy="141" rx="12" ry="10" opacity=".5"/>
 </g>
 <use href="#figB"/><use href="#neonB"/>
</symbol><symbol id="thM" viewBox="0 0 100 56" preserveAspectRatio="none"><rect width="100" height="56" fill="url(#skMh)"/><rect width="100" height="56" fill="url(#skMv)"/><g filter="url(#blur2)" fill="#fff"><ellipse cx="62" cy="38" rx="7" ry="4" opacity="0.9"/><ellipse cx="70" cy="43" rx="7" ry="4" opacity="0.85"/><ellipse cx="58" cy="32" rx="4" ry="2.5" opacity="0.7"/><ellipse cx="88" cy="8" rx="5" ry="3" opacity="0.5"/><ellipse cx="93" cy="15" rx="3" ry="2" opacity="0.4"/></g><path d="M54 56 C60.96 50.0 71.4 48 83.0 48 S105.03999999999999 50.0 112 56Z" fill="#9fa3a6"/><path d="M85.9 56 C89.96000000000001 52.0 97.5 49.6 112 56Z" fill="#7f8890" opacity=".5"/><use href="#figB" transform="translate(-9.20 3.88) scale(0.17)"/></symbol><symbol id="thH" viewBox="0 0 100 56" preserveAspectRatio="none"><rect width="100" height="56" fill="url(#skMh)"/><rect width="100" height="56" fill="url(#skMv)"/><g filter="url(#blur2)" fill="#fff"><ellipse cx="56" cy="48" rx="8" ry="4" opacity="0.9"/><ellipse cx="64" cy="52" rx="6" ry="3" opacity="0.8"/><ellipse cx="88" cy="14" rx="5" ry="2.5" opacity="0.5"/><ellipse cx="92" cy="20" rx="3" ry="2" opacity="0.4"/></g><path d="M54 56 C60.72 53.0 70.8 52 82.0 52 S103.28 53.0 110 56Z" fill="#9fa3a6"/><path d="M84.80000000000001 56 C88.72 54.0 96.0 52.8 110 56Z" fill="#7f8890" opacity=".5"/><use href="#figB" transform="translate(-8.38 3.25) scale(0.168)"/></symbol><symbol id="thV" viewBox="0 0 100 56" preserveAspectRatio="none"><rect width="100" height="56" fill="url(#skMh)"/><rect width="100" height="56" fill="url(#skMv)"/><g filter="url(#blur2)" fill="#fff"><ellipse cx="62" cy="22" rx="9" ry="4" opacity="0.9"/><ellipse cx="70" cy="28" rx="7" ry="4" opacity="0.85"/><ellipse cx="52" cy="18" rx="5" ry="2" opacity="0.6"/><ellipse cx="80" cy="33" rx="4" ry="2.5" opacity="0.7"/></g><path d="M55 56 C64.6 35.0 79.0 28 95.0 28 S125.4 35.0 135 56Z" fill="#9fa3a6"/><path d="M99.0 56 C104.6 42.0 115.0 33.6 135 56Z" fill="#7f8890" opacity=".5"/><g transform="translate(33 39) scale(0.75 0.75)"><polygon fill="#2a2530" points="-2,-16 6,-17 9,-8 7,0 -3,0 -5,-8"/><polygon fill="#2a2530" points="-3,-15 -9,-27 -7,-28 0,-16"/><polygon fill="#2a2530" points="5,-16 12,-24 14,-23 8,-13"/><circle cx="-9" cy="-29" r="1.6" fill="#e6c8b8"/><circle cx="-1" cy="-19.5" r="3.2" fill="#c9a48e"/><path d="M-3.5 -21 A3.2 3.2 0 0 1 2.2 -20.5 L1 -23 L-3 -23Z" fill="#6b5040"/><polygon fill="#7890b2" points="-4,0 7,0 9,7 4,10 6,18 2,19 -2,11 -5,6"/><polygon fill="#6a83a6" points="1,2 8,4 11,12 8,19 5,18 6,11 1,8"/><polygon fill="#20222c" points="1,18 7,17 9,20 2,21"/><polygon fill="#d9c391" points="-8,27 -6,24 10,18 15,17 16,19 11,22 -4,28"/></g><g fill="none" stroke-width=".6"><path stroke="#9ff" d="M34 18 Q42 32 47 52"/><path stroke="#fbd" d="M32 18 Q39 34 43 54"/><path stroke="#fff" d="M30 20 Q36 36 40 55" stroke-width=".5"/></g></symbol><symbol id="tfJ1" viewBox="0 0 100 56" preserveAspectRatio="none"><rect width="100" height="56" fill="url(#skTh)"/><rect width="100" height="56" fill="url(#skTv)"/><g filter="url(#blur2)" fill="#fff"><ellipse cx="72" cy="20" rx="5" ry="3" opacity="0.7"/><ellipse cx="78" cy="25" rx="3" ry="3" opacity="0.6"/><ellipse cx="46" cy="49" rx="7" ry="4" opacity="0.9"/><ellipse cx="38" cy="45" rx="4" ry="2" opacity="0.7"/></g><use href="#figB" transform="translate(2.36 -4.50) scale(0.164)"/></symbol><symbol id="tfJ2" viewBox="0 0 100 56" preserveAspectRatio="none"><rect width="100" height="56" fill="url(#skTh)"/><rect width="100" height="56" fill="url(#skTv)"/><g filter="url(#blur2)" fill="#fff"><ellipse cx="84" cy="16" rx="5" ry="3" opacity="0.7"/><ellipse cx="88" cy="22" rx="3" ry="3" opacity="0.6"/><ellipse cx="55" cy="46" rx="8" ry="4" opacity="0.9"/><ellipse cx="63" cy="51" rx="6" ry="3" opacity="0.8"/></g><use href="#figB" transform="translate(-2.76 2.20) scale(0.161)"/><path d="M58 56 C62.56 54.875 69.4 54.5 77.0 54.5 S91.44 54.875 96 56Z" fill="#9fa3a6"/><path d="M78.9 56 C81.56 55.25 86.5 54.8 96 56Z" fill="#7f8890" opacity=".5"/></symbol><symbol id="tfJ3" viewBox="0 0 100 56" preserveAspectRatio="none"><rect width="100" height="56" fill="url(#skTh)"/><rect width="100" height="56" fill="url(#skTv)"/><g filter="url(#blur2)" fill="#fff"><ellipse cx="47" cy="46" rx="7" ry="4" opacity="0.9"/><ellipse cx="54" cy="51" rx="6" ry="3" opacity="0.8"/></g><use href="#figB" transform="translate(3.10 -1.44) scale(0.165)"/></symbol><symbol id="tfJ4" viewBox="0 0 100 56" preserveAspectRatio="none"><rect width="100" height="56" fill="url(#skTh)"/><rect width="100" height="56" fill="url(#skTv)"/><g filter="url(#blur2)" fill="#fff"><ellipse cx="86" cy="13" rx="5" ry="3" opacity="0.7"/><ellipse cx="90" cy="19" rx="3" ry="3" opacity="0.6"/><ellipse cx="58" cy="45" rx="8" ry="4" opacity="0.9"/><ellipse cx="66" cy="50" rx="5" ry="3" opacity="0.8"/></g><use href="#figB" transform="translate(-5.10 3.24) scale(0.16)"/><path d="M58 56 C62.8 54.5 70.0 54 78.0 54 S93.2 54.5 98 56Z" fill="#9fa3a6"/><path d="M80.0 56 C82.8 55.0 88.0 54.4 98 56Z" fill="#7f8890" opacity=".5"/></symbol><symbol id="tfS" viewBox="0 0 100 56" preserveAspectRatio="none"><rect width="100" height="56" fill="url(#skTh)"/><rect width="100" height="56" fill="url(#skTv)"/><g filter="url(#blur2)" fill="#fff"><ellipse cx="89" cy="8" rx="4" ry="3" opacity="0.7"/><ellipse cx="93" cy="14" rx="3" ry="2" opacity="0.6"/><ellipse cx="62" cy="40" rx="7" ry="4" opacity="0.9"/><ellipse cx="68" cy="45" rx="5" ry="3" opacity="0.8"/></g><path d="M52 56 C59.2 48.875 70.0 46.5 82.0 46.5 S104.8 48.875 112 56Z" fill="#9fa3a6"/><path d="M85.0 56 C89.2 51.25 97.0 48.4 112 56Z" fill="#7f8890" opacity=".5"/><g transform="translate(37 34) scale(0.8 0.8)"><polygon fill="#2a2530" points="-2,-16 6,-17 9,-8 7,0 -3,0 -5,-8"/><polygon fill="#2a2530" points="-3,-15 -15,-13 -15,-11 -3,-10"/><circle cx="-16.5" cy="-12" r="1.6" fill="#e6c8b8"/><circle cx="-1" cy="-19.5" r="3.2" fill="#c9a48e"/><path d="M-3.5 -21 A3.2 3.2 0 0 1 2.2 -20.5 L1 -23 L-3 -23Z" fill="#6b5040"/><polygon fill="#7890b2" points="-4,0 7,0 9,7 4,10 6,18 2,19 -2,11 -5,6"/><polygon fill="#6a83a6" points="1,2 8,4 11,12 8,19 5,18 6,11 1,8"/><polygon fill="#20222c" points="1,18 7,17 9,20 2,21"/><polygon fill="#d9c391" points="-8,27 -6,24 10,18 15,17 16,19 11,22 -4,28"/></g></symbol><symbol id="tfR" viewBox="0 0 100 56" preserveAspectRatio="none"><rect width="100" height="56" fill="url(#skTh)"/><rect width="100" height="56" fill="url(#skTv)"/><g filter="url(#blur2)" fill="#fff"><ellipse cx="24" cy="14" rx="8" ry="4" opacity="0.9"/><ellipse cx="30" cy="20" rx="5" ry="3" opacity="0.8"/></g><path d="M-6 56 C9.12 33.5 31.799999999999997 26 57.0 26 S104.88 33.5 120 56Z" fill="#9fa3a6"/><path d="M63.30000000000001 56 C72.12 41.0 88.5 32.0 120 56Z" fill="#7f8890" opacity=".5"/><rect x="134" y="22" width="1.6" height="30" fill="#2a2a2a"/></symbol><symbol id="tfN" viewBox="0 0 100 56" preserveAspectRatio="none"><rect width="100" height="56" fill="url(#skTh)"/><rect width="100" height="56" fill="url(#skTv)"/><g filter="url(#blur2)" fill="#fff"><ellipse cx="70" cy="22" rx="5" ry="3" opacity="0.6"/><ellipse cx="50" cy="49" rx="8" ry="4" opacity="0.85"/><ellipse cx="60" cy="52" rx="6" ry="3" opacity="0.8"/></g><use href="#figB" transform="translate(6.40 -4.26) scale(0.16)"/><use href="#neonBm" transform="translate(6.40 -4.26) scale(0.16)"/></symbol><symbol id="tfN2" viewBox="0 0 100 56" preserveAspectRatio="none"><rect width="100" height="56" fill="url(#skTh)"/><rect width="100" height="56" fill="url(#skTv)"/><g filter="url(#blur2)" fill="#fff"><ellipse cx="48" cy="24" rx="5" ry="3" opacity="0.6"/><ellipse cx="14" cy="50" rx="10" ry="4" opacity="0.85"/></g><use href="#figB" transform="translate(-21.60 -5.76) scale(0.16)"/><use href="#neonBm" transform="translate(-21.60 -5.76) scale(0.16)"/></symbol><symbol id="tfN3" viewBox="0 0 100 56" preserveAspectRatio="none"><rect width="100" height="56" fill="url(#skTh)"/><rect width="100" height="56" fill="url(#skTv)"/><g filter="url(#blur2)" fill="#fff"><ellipse cx="62" cy="44" rx="7" ry="4" opacity="0.85"/><ellipse cx="70" cy="49" rx="6" ry="3" opacity="0.8"/><ellipse cx="40" cy="50" rx="6" ry="3" opacity="0.6"/></g><path d="M78 56 C84.24 53.75 93.6 53 104.0 53 S123.75999999999999 53.75 130 56Z" fill="#9fa3a6"/><path d="M106.6 56 C110.24000000000001 54.5 117.0 53.6 130 56Z" fill="#7f8890" opacity=".5"/><use href="#figB" transform="translate(-9.88 2.95) scale(0.168)"/><use href="#neonBm" transform="translate(-9.88 2.95) scale(0.168)"/></symbol><symbol id="tfJ5" viewBox="0 0 100 56" preserveAspectRatio="none"><rect width="100" height="56" fill="url(#skTh)"/><rect width="100" height="56" fill="url(#skTv)"/><g filter="url(#blur2)" fill="#fff"><ellipse cx="84" cy="14" rx="5" ry="3" opacity="0.7"/><ellipse cx="88" cy="20" rx="3" ry="3" opacity="0.6"/><ellipse cx="58" cy="46" rx="8" ry="4" opacity="0.9"/><ellipse cx="66" cy="51" rx="5" ry="3" opacity="0.8"/></g><use href="#figB" transform="translate(0.92 0.83) scale(0.163)"/><use href="#neonBm" transform="translate(0.92 0.83) scale(0.163)"/><path d="M60 56 C64.8 54.875 72.0 54.5 80.0 54.5 S95.2 54.875 100 56Z" fill="#9fa3a6"/><path d="M82.0 56 C84.8 55.25 90.0 54.8 100 56Z" fill="#7f8890" opacity=".5"/></symbol><symbol id="tfL" viewBox="0 0 100 56" preserveAspectRatio="none"><rect width="100" height="56" fill="url(#skTh)"/><rect width="100" height="56" fill="url(#skTv)"/><g filter="url(#blur2)" fill="#fff"><ellipse cx="28" cy="35" rx="7" ry="3" opacity="0.85"/><ellipse cx="36" cy="40" rx="6" ry="3" opacity="0.8"/></g><path d="M14 56 C21.68 48.5 33.2 46 46.0 46 S70.32 48.5 78 56Z" fill="#9fa3a6"/><path d="M49.2 56 C53.68 51.0 62.0 48.0 78 56Z" fill="#7f8890" opacity=".5"/><polygon fill="#17151c" points="62,0 82,0 84,8 64,10"/><polygon fill="#8aa0bf" points="56,6 66,3 84,8 82,16 70,18 70,32 64,34 60,22"/><polygon fill="#7288a8" points="70,10 82,12 80,18 72,20 72,34 66,34"/><polygon fill="#15171f" points="48,24 52,22 70,42 67,45"/><polygon fill="#f0f0f0" points="60,34 66,33 70,37 64,39"/></symbol><symbol id="tfB" viewBox="0 0 100 56" preserveAspectRatio="none"><rect width="100" height="56" fill="url(#skTh)"/><rect width="100" height="56" fill="url(#skTv)"/><g filter="url(#blur2)" fill="#fff"><ellipse cx="62" cy="27" rx="8" ry="4" opacity="0.9"/><ellipse cx="70" cy="33" rx="6" ry="3" opacity="0.8"/></g><path d="M52 56 C61.36 41.0 75.4 36 91.0 36 S120.64 41.0 130 56Z" fill="#9fa3a6"/><path d="M94.9 56 C100.36 46.0 110.5 40.0 130 56Z" fill="#7f8890" opacity=".5"/><g transform="translate(34 38) scale(0.78 0.78)"><polygon fill="#2a2530" points="-2,-16 6,-17 9,-8 7,0 -3,0 -5,-8"/><polygon fill="#2a2530" points="-3,-15 -9,-27 -7,-28 0,-16"/><polygon fill="#2a2530" points="5,-16 12,-24 14,-23 8,-13"/><circle cx="-9" cy="-29" r="1.6" fill="#e6c8b8"/><circle cx="-1" cy="-19.5" r="3.2" fill="#c9a48e"/><path d="M-3.5 -21 A3.2 3.2 0 0 1 2.2 -20.5 L1 -23 L-3 -23Z" fill="#6b5040"/><polygon fill="#7890b2" points="-4,0 7,0 9,7 4,10 6,18 2,19 -2,11 -5,6"/><polygon fill="#6a83a6" points="1,2 8,4 11,12 8,19 5,18 6,11 1,8"/><polygon fill="#20222c" points="1,18 7,17 9,20 2,21"/><polygon fill="#d9c391" points="-8,27 -6,24 10,18 15,17 16,19 11,22 -4,28"/></g></symbol><symbol id="tfP" viewBox="0 0 100 56" preserveAspectRatio="none"><rect width="100" height="56" fill="url(#skTh)"/><rect width="100" height="56" fill="url(#skTv)"/><g filter="url(#blur2)" fill="#fff"><ellipse cx="6" cy="18" rx="6" ry="7" opacity="0.8"/></g><path d="M-20 56 L-20 27 Q30 30 78 50 L86 56Z" fill="#a3a5a6"/><path d="M-20 40 Q30 40 72 54 L76 56 L-20 56Z" fill="#8f969c"/><path d="M30 36 Q55 42 74 52" stroke="#4a6fb0" stroke-width="2" fill="none"/><rect x="71" y="22" width="1.3" height="28" fill="#2a2a2a"/></symbol>
</svg>
<div class="bgc" style="left:0;top:1572px;background:#a2943f"></div><div class="bgc" style="left:2840px;top:1572px;background:#3a1f0a"></div>
<div id="win">
<div style="left:0px;top:0px;width:2880px;height:2px;background:#a3a5a7;opacity:.85;"></div>
<div style="left:0px;top:1611px;width:2880px;height:1px;background:#3a3f42;"></div>
<div style="left:16px;top:16px;width:24px;height:24px;border-radius:50%;background:#ec6a5e;"></div>
<div style="left:56px;top:16px;width:24px;height:24px;border-radius:50%;background:#f5bf4f;"></div>
<div style="left:96px;top:16px;width:24px;height:24px;border-radius:50%;background:#61c554;"></div>
<div style="top:22.0px;height:36px;line-height:36px;font-size:24px;color:#e4e7ea;white-space:nowrap;left:1157.0px;width:600px;text-align:center;">未命名项目</div>
<div style="left:2179px;top:25px;width:30px;height:30px;border-radius:50%;border:6.5px solid #2e353b;"></div>
<svg style="left:2247.5px;top:23.5px;" width="33" height="33" viewBox="0 0 24 24" fill="none" stroke="#d5d8dc" stroke-width="1.7" stroke-linecap="round" stroke-linejoin="round"><rect x="2.5" y="4.5" width="19" height="15" rx="2.5"/><path d="M2.5 14.5H21.5M9 14.5V19.5"/></svg>
<svg style="left:2311.0px;top:22.0px;" width="34" height="34" viewBox="0 0 24 24" fill="none" stroke="#d5d8dc" stroke-width="1.7" stroke-linecap="round" stroke-linejoin="round"><path d="M3.5 3.5H16.5L20.5 7.5V20.5H3.5Z"/><path d="M7.5 3.5V9H15.5V3.5M7.5 20.5V14H16.5V20.5"/></svg>
<svg style="left:2373.0px;top:20.0px;" width="38" height="38" viewBox="0 0 24 24" fill="none" stroke="#d5d8dc" stroke-width="1.6" stroke-linecap="round" stroke-linejoin="round"><path d="M7 19A4.7 4.7 0 0 1 6.3 9.7A6 6 0 0 1 17.8 9.2A4.9 4.9 0 0 1 17.5 19Z"/><path d="M10.3 11.5V16.5M8.6 14.8L10.3 16.5M13.7 16.5V11.5M13.7 11.5L15.4 13.2" stroke-width="1.5"/></svg>
<svg style="left:2439.5px;top:23.5px;" width="33" height="33" viewBox="0 0 24 24" fill="none" stroke="#d5d8dc" stroke-width="1.6" stroke-linecap="round" stroke-linejoin="round"><path d="M5 13V11A7 7 0 0 1 19 11V13"/><rect x="3.2" y="12" width="3.6" height="6" rx="1.8"/><rect x="17.2" y="12" width="3.6" height="6" rx="1.8"/><path d="M19 18C19 20.5 16 21 13.5 21"/><rect x="10.2" y="19.8" width="3.6" height="2.4" rx="1.2"/></svg>
<svg style="left:2505.0px;top:25.0px;" width="30" height="30" viewBox="0 0 24 24" fill="none" stroke="#d5d8dc" stroke-width="1.7" stroke-linecap="round" stroke-linejoin="round"><rect x="3.5" y="3.5" width="6.5" height="6.5"/><rect x="14" y="3.5" width="6.5" height="6.5"/><rect x="3.5" y="14" width="6.5" height="6.5"/><path d="M14 14.5H21M14 17.5H21M14 20.5H21"/></svg>
<svg style="left:2567px;top:24px" width="36" height="33" viewBox="0 0 40 38" fill="none" stroke-width="3.4" stroke-linecap="round" stroke-linejoin="round"><defs><linearGradient id="cartg" x1="0" y1="0" x2="1" y2="1"><stop offset="0" stop-color="#ff8a3c"/><stop offset="1" stop-color="#f052c8"/></linearGradient></defs><path d="M3 3.5H7.5L13 26H31L35.5 10H10" stroke="url(#cartg)"/><path d="M19 17.5H27" stroke="#ff9a4a"/><circle cx="14.5" cy="33.5" r="2.5" fill="#ff7a5a" stroke="none"/><circle cx="30" cy="33.5" r="2.5" fill="#f052c8" stroke="none"/></svg>
<svg style="left:2624.0px;top:24.0px;" width="32" height="32" viewBox="0 0 24 24" fill="none" stroke="#d5d8dc" stroke-width="1.7" stroke-linecap="round" stroke-linejoin="round"><circle cx="12" cy="8" r="4.6"/><path d="M3.5 21C3.5 16.5 7 14.2 12 14.2S20.5 16.5 20.5 21Z"/></svg>
<div style="left:2688px;top:16px;width:160px;height:48px;border-radius:10px;background:linear-gradient(150deg,#3fd2f7 0%,#43e4d6 32%,#47f0bf 62%);"></div>
<div style="top:23.5px;height:36px;line-height:36px;font-size:24px;color:#1a2730;white-space:nowrap;left:2698.0px;width:100px;text-align:center;">导出</div>
<svg style="left:2811.75px;top:36.375px;" width="16.5" height="10.25" viewBox="0 0 16.5 10.25"><path d="M2 2 L8.25 8.25 L14.5 2" fill="none" stroke="#1a2730" stroke-width="2.2" stroke-linecap="round" stroke-linejoin="round"/></svg>
<div style="left:24px;top:80px;width:1046px;height:874px;border-radius:22px;overflow:hidden;background:#181b1f;">
<div class="hdr" style="left:0px;top:0px;width:1046px;height:112px;"></div>
<div style="left:0px;top:112px;width:320px;height:762px;background:#20252c;"></div>
<div style="left:320px;top:112px;width:726px;height:80px;background:linear-gradient(90deg,#1b2026,#21262d 60px);"></div>
</div>
<div style="top:146.0px;height:36px;line-height:36px;font-size:24px;color:#50e0b8;white-space:nowrap;left:51.0px;width:140px;text-align:center;">我的素材</div>
<div style="top:146.0px;height:36px;line-height:36px;font-size:24px;color:#e8ebee;white-space:nowrap;left:181.0px;width:140px;text-align:center;">素材库</div>
<div style="top:146.0px;height:36px;line-height:36px;font-size:24px;color:#e8ebee;white-space:nowrap;left:311.0px;width:140px;text-align:center;">音频</div>
<div style="top:146.0px;height:36px;line-height:36px;font-size:24px;color:#e8ebee;white-space:nowrap;left:441.0px;width:140px;text-align:center;">文字</div>
<div style="top:146.0px;height:36px;line-height:36px;font-size:24px;color:#e8ebee;white-space:nowrap;left:571.0px;width:140px;text-align:center;">转场</div>
<div style="top:146.0px;height:36px;line-height:36px;font-size:24px;color:#e8ebee;white-space:nowrap;left:701.0px;width:140px;text-align:center;">特效</div>
<div style="top:146.0px;height:36px;line-height:36px;font-size:24px;color:#e8ebee;white-space:nowrap;left:831.0px;width:140px;text-align:center;">滤镜</div>
<svg style="left:98px;top:102px" width="46" height="42" viewBox="0 0 46 42" fill="none"><defs><linearGradient id="mmg" x1="0" y1="0" x2="1" y2="1"><stop offset="0" stop-color="#27e2d0"/><stop offset="1" stop-color="#3aa0ff"/></linearGradient><linearGradient id="mmg2" x1="0" y1="0" x2="1" y2="1"><stop offset="0" stop-color="#2b8c9a" stop-opacity=".2"/><stop offset=".5" stop-color="#2b9cae"/><stop offset="1" stop-color="#2b8c9a" stop-opacity=".1"/></linearGradient></defs><path d="M19 3.5H33.5Q41.5 3.5 41.5 11.5V27" stroke="url(#mmg2)" stroke-width="3.6" stroke-linecap="round"/><rect x="4.2" y="10.2" width="30" height="26" rx="5" stroke="url(#mmg)" stroke-width="4.4"/><circle cx="13" cy="19" r="3.2" fill="#2fd0e0"/><path d="M5 28C10 31 14 31 19 28S28 24 34 28" stroke="url(#mmg)" stroke-width="4"/></svg>
<svg style="left:229.0px;top:100.0px;" width="44" height="44" viewBox="0 0 24 24" fill="none" stroke="#c3c7d0" stroke-width="2.2" stroke-linecap="round" stroke-linejoin="round"><path d="M3.2 6.5Q3.2 3.6 6 3.6Q9 3.6 11 4.8Q12.5 5.6 15 5.6H18Q20.8 5.6 20.8 8.5V17.5Q20.8 20.4 18 20.4H6Q3.2 20.4 3.2 17.5Z"/><path d="M9.3 15.6A2 2 0 0 1 9.6 11.8A2.6 2.6 0 0 1 14.4 11.8A2 2 0 0 1 14.7 15.6Z" fill="#c3c7d0" stroke-width="1"/></svg>
<svg style="left:359.0px;top:101.5px;" width="44" height="44" viewBox="0 0 24 24" fill="none" stroke="#c3c7d0" stroke-width="2.4" stroke-linecap="round" stroke-linejoin="round"><path d="M8.2 18V6.5L19.5 3.6V15.5" stroke-width="2.6"/><ellipse cx="5.8" cy="18.2" rx="3" ry="2.6" fill="#c3c7d0" stroke="none"/><ellipse cx="17" cy="15.8" rx="3" ry="2.6" fill="#c3c7d0" stroke="none"/></svg>
<svg style="left:480px;top:100px" width="64" height="44" viewBox="480 100 64 44" fill="none" stroke-linecap="round" stroke-linejoin="round"><path d="M496.5 113V109H524V113M510.3 109V134.5M504.5 134.7H516" stroke="#c3c7d0" stroke-width="5.2"/></svg>
<svg style="left:606px;top:96px" width="70" height="50" viewBox="606 96 70 50" fill="none" stroke-linecap="round" stroke-linejoin="round"><defs><linearGradient id="trg" x1="0" y1="0" x2="1" y2="0"><stop offset="0" stop-color="#5a5f69" stop-opacity=".15"/><stop offset=".45" stop-color="#7d828c"/><stop offset="1" stop-color="#8d929c"/></linearGradient></defs><path d="M641 114.5H649V107L662.5 117.5L649 128.5V121.5" stroke="url(#trg)" stroke-width="3.4"/><path d="M620.5 125L632.5 113.5V120H641.5V130H632.5V136.5Z" fill="#c3c7d0" stroke="#c3c7d0" stroke-width="2.6"/></svg>
<svg style="left:742px;top:100px" width="56" height="46" viewBox="742 100 56 46" fill="none" stroke-linecap="round" stroke-linejoin="round"><path d="M768 108.5L772.3 116.2L781.5 115.6L775.6 122.4L779.2 130.5L770.6 127.6L764 133.6L763.8 124.8L755.8 120.8L764.4 118.2Z" fill="#c3c7d0" stroke="#c3c7d0" stroke-width="2.4"/><path d="M777.5 129.5L786.5 138" stroke="#8d929c" stroke-width="4"/><path d="M748.8 110V115M746.3 112.5H751.3" stroke="#c3c7d0" stroke-width="1.2"/><circle cx="788" cy="112" r="1.8" fill="#c3c7d0"/><circle cx="755.8" cy="137.5" r="2" fill="#c3c7d0"/></svg>
<svg style="left:876px;top:100px" width="56" height="46" viewBox="876 100 56 46" fill="none" stroke-linecap="round" stroke-linejoin="round"><circle cx="902.6" cy="114.2" r="8.6" fill="#c3c7d0"/><circle cx="893.4" cy="128.8" r="10.4" fill="#0e131a"/><circle cx="910.8" cy="128.8" r="10.4" fill="#0e131a"/><circle cx="893.4" cy="128.8" r="8.8" fill="#c3c7d0"/><circle cx="910.8" cy="128.8" r="8.8" fill="#c3c7d0"/><path d="M884.5 107.5V112.5M882 110H887" stroke="#c3c7d0" stroke-width="1.1"/></svg>
<svg style="left:1036px;top:120px;" width="20" height="32" viewBox="0 0 20 32"><path d="M5 3 L15 16 L5 29" fill="none" stroke="#eef1f4" stroke-width="3.6" stroke-linecap="round" stroke-linejoin="round"/></svg>
<div style="left:40px;top:208px;width:276px;height:64px;border-radius:18px;background:#2a2e36;"></div>
<svg style="left:69px;top:236px;" width="12" height="9" viewBox="0 0 12 9"><path d="M0.5 0.5H11.5L6 8.5Z" fill="#b9bdc3"/></svg>
<div style="top:222.0px;height:36px;line-height:36px;font-size:24px;color:#d3d6da;white-space:nowrap;left:106px;">项目素材</div>
<div style="left:40px;top:368px;width:276px;height:64px;border-radius:18px;background:#2a2e36;"></div>
<svg style="left:71px;top:393px;" width="9" height="13" viewBox="0 0 9 13"><path d="M0.5 0.5V12.5L8.5 6.5Z" fill="#8c929a"/></svg>
<div style="top:382.0px;height:36px;line-height:36px;font-size:24px;color:#8c929a;white-space:nowrap;left:106px;">本地素材</div>
<div style="left:40px;top:448px;width:276px;height:64px;border-radius:18px;background:#2a2e36;"></div>
<svg style="left:71px;top:473px;" width="9" height="13" viewBox="0 0 9 13"><path d="M0.5 0.5V12.5L8.5 6.5Z" fill="#8c929a"/></svg>
<div style="top:462.0px;height:36px;line-height:36px;font-size:24px;color:#8c929a;white-space:nowrap;left:106px;">云空间</div>
<div style="left:40px;top:528px;width:276px;height:64px;border-radius:18px;background:#2a2e36;"></div>
<svg style="left:71px;top:553px;" width="9" height="13" viewBox="0 0 9 13"><path d="M0.5 0.5V12.5L8.5 6.5Z" fill="#8c929a"/></svg>
<div style="top:542.0px;height:36px;line-height:36px;font-size:24px;color:#8c929a;white-space:nowrap;left:106px;">调整图层</div>
<div style="left:40px;top:608px;width:276px;height:64px;border-radius:18px;background:#2a2e36;"></div>
<svg style="left:71px;top:633px;" width="9" height="13" viewBox="0 0 9 13"><path d="M0.5 0.5V12.5L8.5 6.5Z" fill="#8c929a"/></svg>
<div style="top:622.0px;height:36px;line-height:36px;font-size:24px;color:#8c929a;white-space:nowrap;left:106px;">复合片段</div>
<div style="left:40px;top:688px;width:276px;height:64px;border-radius:18px;background:#2a2e36;"></div>
<div style="top:702.0px;height:36px;line-height:36px;font-size:24px;color:#a4a9b0;white-space:nowrap;font-weight:700;letter-spacing:0.5px;left:106px;">Photos Library</div>
<div style="top:301.0px;height:36px;line-height:36px;font-size:24px;color:#50e0b8;white-space:nowrap;left:137px;">文件夹</div>
<svg style="left:45.0px;top:898.0px;" width="34" height="34" viewBox="0 0 24 24" fill="none" stroke="#d5d8dc" stroke-width="1.6" stroke-linecap="round" stroke-linejoin="round"><path d="M2.5 20V4.5H8.5L11 7H20.5V13" stroke-linejoin="round"/><path d="M2.5 20H14"/><path d="M19 16V22M16 19H22" stroke-width="1.5"/></svg>
<svg style="left:109.0px;top:898.0px;" width="34" height="34" viewBox="0 0 24 24" fill="none" stroke="#454c55" stroke-width="1.6" stroke-linecap="round" stroke-linejoin="round"><path d="M2.5 20V4.5H8.5L11 7H20.5V13" stroke-linejoin="round"/><path d="M2.5 20H14"/><path d="M17.5 17L21 20.5M21 17L17.5 20.5" stroke-width="1.5"/></svg>
<div style="left:282px;top:896px;width:36px;height:36px;border-radius:7px;background:#2a3038;"></div>
<svg style="left:292px;top:904px;" width="16" height="20" viewBox="0 0 16 20"><path d="M11.5 3L4.5 10L11.5 17" fill="none" stroke="#50e0b8" stroke-width="2.6" stroke-linecap="round" stroke-linejoin="round"/></svg>
<div style="left:376px;top:208px;width:122px;height:48px;border-radius:11px;background:#343a43;"></div>
<div style="top:214.0px;height:36px;line-height:36px;font-size:24px;color:#c9cdd2;white-space:nowrap;left:392px;">导入</div>
<svg style="left:466.5px;top:226.75px;" width="17" height="10.5" viewBox="0 0 17 10.5"><path d="M2 2 L8.5 8.5 L15 2" fill="none" stroke="#c9cdd2" stroke-width="2.4" stroke-linecap="round" stroke-linejoin="round"/></svg>
<div style="left:514px;top:208px;width:166px;height:48px;border-radius:11px;background:#343a43;"></div>
<svg style="left:534px;top:220px;" width="24" height="24" viewBox="0 0 24 24"><circle cx="12" cy="12" r="10" fill="none" stroke="#d0d4d9" stroke-width="2"/><circle cx="12" cy="12" r="5.6" fill="#d0d4d9"/></svg>
<div style="top:214.0px;height:36px;line-height:36px;font-size:24px;color:#c9cdd2;white-space:nowrap;left:574px;">录制</div>
<svg style="left:648.5px;top:226.75px;" width="17" height="10.5" viewBox="0 0 17 10.5"><path d="M2 2 L8.5 8.5 L15 2" fill="none" stroke="#c9cdd2" stroke-width="2.4" stroke-linecap="round" stroke-linejoin="round"/></svg>
<svg style="left:930px;top:215px;" width="40" height="36" viewBox="0 0 40 36"><path d="M3 3H24L16 14V31L11 28V14Z" fill="none" stroke="#d5d8dc" stroke-width="2.2" stroke-linejoin="round"/><path d="M23 18.5H37M23 24.5H37M23 30.5H37" stroke="#d5d8dc" stroke-width="2"/></svg>
<div style="left:998.8px;top:229.8px;width:6.4px;height:6.4px;border-radius:50%;background:#d5d8dc;"></div>
<div style="left:1009.8px;top:229.8px;width:6.4px;height:6.4px;border-radius:50%;background:#d5d8dc;"></div>
<div style="left:1020.8px;top:229.8px;width:6.4px;height:6.4px;border-radius:50%;background:#d5d8dc;"></div>
<div style="left:375px;top:303px;width:664px;height:52px;border-radius:13px;border:2px solid #343b43;background:#0f1316;"></div>
<div style="top:312.0px;height:36px;line-height:36px;font-size:24px;color:#c9cdd2;white-space:nowrap;left:392px;">默认</div>
<svg style="left:448.5px;top:324.75px;" width="17" height="10.5" viewBox="0 0 17 10.5"><path d="M2 2 L8.5 8.5 L15 2" fill="none" stroke="#c9cdd2" stroke-width="2.4" stroke-linecap="round" stroke-linejoin="round"/></svg>
<div style="left:500px;top:314px;width:2px;height:31px;background:#5a616a;"></div>
<svg style="left:529px;top:317px;" width="26" height="26" viewBox="0 0 26 26"><circle cx="10.5" cy="10.5" r="7.5" fill="none" stroke="#c9cdd2" stroke-width="2.2"/><path d="M16 16L22.5 22.5" stroke="#c9cdd2" stroke-width="2.4" stroke-linecap="round"/></svg>
<div style="top:313.0px;height:36px;line-height:36px;font-size:24px;color:#5f666f;white-space:nowrap;left:570px;">搜索素材</div>
<div style="top:393.0px;height:36px;line-height:36px;font-size:24px;color:#e4e7ea;white-space:nowrap;left:377px;">文件夹</div>
<div style="left:382px;top:464px;width:256px;height:144px;border-radius:13px;background:#20252b;"></div>
<div style="left:489px;top:534.5px;width:44px;height:3px;background:#50e0b8;border-radius:2px;"></div>
<div style="left:509.5px;top:514px;width:3px;height:44px;background:#50e0b8;border-radius:2px;"></div>
<div style="top:613.0px;height:36px;line-height:36px;font-size:24px;color:#c9cdd2;white-space:nowrap;left:383px;">导入媒体</div>
<div style="left:670px;top:464px;width:254px;height:144px;border-radius:13px;overflow:hidden;background:#50e0b8;">
<svg style="left:4px;top:4px;overflow:hidden;border-radius:9px;" width="246" height="136" preserveAspectRatio="none"><use href="#thM" width="246" height="136"/></svg>
</div>
<div style="top:613.0px;height:36px;line-height:36px;font-size:24px;color:#eef0f2;white-space:nowrap;left:671px;word-spacing:-1px;">多机位片段 1</div>
<svg style="left:680px;top:556px" width="42" height="36" viewBox="680 556 42 36" fill="none" stroke-linejoin="round" stroke-linecap="round"><rect x="685" y="560.6" width="21" height="20" rx="6" stroke="#fff" stroke-width="1.8" opacity=".95"/><path d="M696.5 566.4H706Q711.6 566.4 711.6 572V573.4L716.2 570.6V583L711.6 580.2V581Q711.6 586.6 706 586.6H696.5Q690.9 586.6 690.9 581V572Q690.9 566.4 696.5 566.4Z" fill="#a9c4e8" stroke="#fff" stroke-width="1.9"/><path d="M698.6 572.6V580.4L705 576.5Z" fill="#fff"/></svg>
<div style="left:871px;top:554px;width:40px;height:40px;border-radius:50%;background:#50e0b8;"></div>
<svg style="left:879px;top:564px;" width="24" height="20" viewBox="0 0 24 20"><path d="M3.5 10.5L9.5 16L20.5 4" fill="none" stroke="#0b0f12" stroke-width="4" stroke-linecap="round" stroke-linejoin="round"/></svg>
<svg style="left:384px;top:670px;overflow:hidden;border-radius:10px;" width="250" height="142" preserveAspectRatio="none"><use href="#thH" width="250" height="142"/></svg>
<div style="left:508px;top:680px;width:116px;height:28px;border-radius:7px;background:rgba(44,56,74,.82);"></div>
<div style="top:677.0px;height:34px;line-height:34px;font-size:23px;color:#e6e9ec;white-space:nowrap;font-weight:700;letter-spacing:0.8px;left:501.5px;width:130px;text-align:center;">00:00:04</div>
<svg style="left:402px;top:764.5px;" width="34" height="36" viewBox="0 0 34 36"><path d="M22.5 29.2H8.2Q1.2 29.2 1.2 22.2V8.2Q1.2 1.2 8.2 1.2H23Q30 1.2 30 8.2V14" fill="rgba(160,190,230,.25)" stroke="#fff" stroke-width="2"/><path d="M11 10.3V19.7L19.2 15Z" fill="none" stroke="#fff" stroke-width="1.8" stroke-linejoin="round"/><path d="M23.2 33.6V19.4H28A3.7 3.7 0 0 1 28 26.8H23.2" fill="none" stroke="#fff" stroke-width="2.2" stroke-linejoin="round" stroke-linecap="round"/></svg>
<div style="left:584px;top:758px;width:40px;height:40px;border-radius:50%;background:#50e0b8;"></div>
<svg style="left:592px;top:768px;" width="24" height="20" viewBox="0 0 24 20"><path d="M3.5 10.5L9.5 16L20.5 4" fill="none" stroke="#0b0f12" stroke-width="4" stroke-linecap="round" stroke-linejoin="round"/></svg>
<svg style="left:672px;top:670px;overflow:hidden;border-radius:10px;" width="250" height="142" preserveAspectRatio="none"><use href="#thV" width="250" height="142"/></svg>
<div style="left:796px;top:680px;width:116px;height:28px;border-radius:7px;background:rgba(44,56,74,.82);"></div>
<div style="top:677.0px;height:34px;line-height:34px;font-size:23px;color:#e6e9ec;white-space:nowrap;font-weight:700;letter-spacing:0.8px;left:789.5px;width:130px;text-align:center;">00:00:05</div>
<svg style="left:690px;top:764.5px;" width="34" height="36" viewBox="0 0 34 36"><path d="M22.5 29.2H8.2Q1.2 29.2 1.2 22.2V8.2Q1.2 1.2 8.2 1.2H23Q30 1.2 30 8.2V14" fill="rgba(160,190,230,.25)" stroke="#fff" stroke-width="2"/><path d="M11 10.3V19.7L19.2 15Z" fill="none" stroke="#fff" stroke-width="1.8" stroke-linejoin="round"/><path d="M23.2 33.6V19.4H28A3.7 3.7 0 0 1 28 26.8H23.2" fill="none" stroke="#fff" stroke-width="2.2" stroke-linejoin="round" stroke-linecap="round"/></svg>
<div style="left:872px;top:758px;width:40px;height:40px;border-radius:50%;background:#50e0b8;"></div>
<svg style="left:880px;top:768px;" width="24" height="20" viewBox="0 0 24 20"><path d="M3.5 10.5L9.5 16L20.5 4" fill="none" stroke="#0b0f12" stroke-width="4" stroke-linecap="round" stroke-linejoin="round"/></svg>
<div style="top:817.0px;height:36px;line-height:36px;font-size:24px;color:#c9cdd2;white-space:nowrap;letter-spacing:0.85px;left:383px;">My Video-highlight....</div>
<div style="top:817.0px;height:36px;line-height:36px;font-size:24px;color:#c9cdd2;white-space:nowrap;letter-spacing:1.0px;left:671px;">My Video.mp4</div>
<svg style="left:897px;top:930px;" width="26" height="40" viewBox="0 0 26 40"><path d="M3 2V31L9.5 25L14.5 36.5L19 34.5L14 23.5H23Z" fill="#0a0a0a" stroke="#fff" stroke-width="2.2" stroke-linejoin="round"/></svg>
<div style="left:1086px;top:80px;width:1202px;height:874px;border-radius:22px 22px 4px 4px;overflow:hidden;background:#0a0c0f;">
<div class="hdr" style="left:0px;top:0px;width:1202px;height:80px;"></div>
<div style="left:0px;top:80px;width:598px;height:794px;background:#181b1f;"></div>
<div style="left:602px;top:80px;width:600px;height:794px;background:#0c1219;"></div>
<div style="left:602px;top:80px;width:600px;height:152px;background:#10151b;"></div>
<div style="left:602px;top:722px;width:600px;height:152px;background:#20262d;"></div>
</div>
<div style="top:102.0px;height:36px;line-height:36px;font-size:24px;color:#e8ebee;white-space:nowrap;left:1119px;">播放器</div>
<div style="left:1222px;top:96px;width:240px;height:48px;border-radius:13px;background:#0c1015;"></div>
<div style="top:102.0px;height:36px;line-height:36px;font-size:24px;color:#c3c7cc;white-space:nowrap;left:1239px;">完整画质</div>
<svg style="left:1430.5px;top:115.75px;" width="17" height="10.5" viewBox="0 0 17 10.5"><path d="M2 2 L8.5 8.5 L15 2" fill="none" stroke="#d5d8dc" stroke-width="2.4" stroke-linecap="round" stroke-linejoin="round"/></svg>
<svg style="left:2128px;top:104px" width="48" height="34" viewBox="2128 104 48 34" fill="none" stroke-linecap="round" stroke-linejoin="round"><g stroke="#56efca" stroke-width="2.3"><rect x="2133" y="109.3" width="7.2" height="9.5" rx="1.6"/><rect x="2145.2" y="109.3" width="7.2" height="9.5" rx="1.6"/><rect x="2133" y="123.4" width="7.2" height="9.5" rx="1.6"/><rect x="2145.2" y="123.4" width="7.2" height="9.5" rx="1.6"/><rect x="2157.6" y="109.3" width="13.2" height="23.6" rx="3"/></g></svg>
<svg style="left:2210px;top:102px" width="44" height="36" viewBox="2210 102 44 36" fill="none" stroke-linecap="round" stroke-linejoin="round"><rect x="2215.3" y="107.1" width="33.4" height="25.8" rx="3.6" stroke="#d5d8dc" stroke-width="2.2"/><path d="M2216.8 131L2220 119.9L2224.3 125.8L2228.2 113.5L2232.9 126.3L2242.3 120.7L2248 123.8" stroke="#d5d8dc" stroke-width="2.1"/></svg>
<div style="left:1091px;top:315px;width:293px;height:330px;background:#000;"></div>
<svg style="left:1091px;top:397px;overflow:hidden;" width="293" height="166" preserveAspectRatio="none"><use href="#picB" width="293" height="166"/></svg>
<div style="left:1384px;top:312px;width:300px;height:336px;background:#000;border:4px solid #50e0b8;border-radius:3px;"></div>
<svg style="left:1388px;top:397px;overflow:hidden;" width="292" height="166" preserveAspectRatio="none"><use href="#picA" width="292" height="166"/></svg>
<div style="top:329.5px;height:27px;line-height:27px;font-size:18px;color:#fff;white-space:nowrap;left:1111.5px;">1</div>
<div style="top:329.5px;height:27px;line-height:27px;font-size:18px;color:#fff;white-space:nowrap;left:1407px;">2</div>
<div style="left:1346px;top:322.5px;width:32px;height:30.5px;border-radius:8px;background:#0b1013;"></div>
<svg style="left:1346px;top:322px" width="32" height="32" viewBox="1346 322 32 32" fill="none" stroke-linecap="round" stroke-linejoin="round"><path d="M1351.2 333.2H1354.6L1362.6 329.6V347L1354.6 343.4H1351.2Z" stroke="#50e0b8" stroke-width="2"/><path d="M1366.6 338.6H1373.4M1370 334.8L1373.8 338.6L1370 342.4" stroke="#50e0b8" stroke-width="2"/></svg>
<div style="left:1642px;top:322.5px;width:32px;height:30.5px;border-radius:8px;background:#0b1013;"></div>
<svg style="left:1642px;top:322px" width="32" height="32" viewBox="1642 322 32 32" fill="none" stroke-linecap="round" stroke-linejoin="round"><path d="M1647.2 333.2H1650.6L1658.6 329.6V347L1650.6 343.4H1647.2Z" stroke="#a4a9b0" stroke-width="1.9"/><path d="M1662.6 338.6H1669.4M1666 334.8L1669.8 338.6L1666 342.4M1648.6 347.4L1666 328.6" stroke="#a4a9b0" stroke-width="1.9"/></svg>
<svg style="left:1688px;top:312px;overflow:hidden;" width="600" height="338" preserveAspectRatio="none"><use href="#picA" width="600" height="338"/></svg>
<svg style="left:1198px;top:110px;" width="940" height="150" viewBox="0 0 940 150"><polygon points="29.4,126.3 26.6,117.7 869.1,26.1 870.9,42.7" fill="#50e0b8"/><circle cx="29" cy="122" r="4.3" fill="#50e0b8"/><polygon points="863,17 905.6,30.7 868,51 873,34.4" fill="#50e0b8" stroke="#50e0b8" stroke-width="1.5" stroke-linejoin="round"/></svg>
<div style="top:862.0px;height:36px;line-height:36px;font-size:24px;color:#dfe2e5;white-space:nowrap;left:1107px;">多机位音频源</div>
<div style="left:1266px;top:854px;width:228px;height:48px;border-radius:13px;background:#0e1216;"></div>
<div style="top:861.0px;height:36px;line-height:36px;font-size:24px;color:#c3c7cc;white-space:nowrap;left:1283px;">视频 1</div>
<svg style="left:1462.5px;top:873.75px;" width="17" height="10.5" viewBox="0 0 17 10.5"><path d="M2 2 L8.5 8.5 L15 2" fill="none" stroke="#d5d8dc" stroke-width="2.4" stroke-linecap="round" stroke-linejoin="round"/></svg>
<div style="left:1724px;top:838px;width:134px;height:8px;border-radius:4px;background:#39404a;"></div>
<div style="left:1724px;top:838px;width:98px;height:8px;border-radius:4px;background:linear-gradient(90deg,#3ddfe0,#47f0b6);"></div>
<div style="left:1810px;top:830px;width:24px;height:24px;border-radius:50%;background:#5d646e;border:3px solid #c7cbd1;"></div>
<div style="left:1894px;top:818px;width:176px;height:48px;border-radius:11px;background:#161b20;"></div>
<div style="top:824.0px;height:38px;line-height:38px;font-size:25px;color:#dfe2e5;white-space:nowrap;letter-spacing:0.6px;left:1894.0px;width:176px;text-align:center;">00:00:07:18</div>
<div style="top:823.0px;height:38px;line-height:38px;font-size:25px;color:#b9bdc3;white-space:nowrap;left:2083px;">/</div>
<div style="top:822.0px;height:38px;line-height:38px;font-size:25px;color:#b9bdc3;white-space:nowrap;letter-spacing:0.6px;left:2110px;">00:00:09:19</div>
<svg style="left:1733px;top:899px;" width="26" height="30" viewBox="0 0 26 30"><path d="M2.5 2.5L23 15L2.5 27.5Z" fill="none" stroke="#dfe2e5" stroke-width="2.4" stroke-linejoin="round"/></svg>
<div style="left:1795px;top:901px;width:26px;height:26px;border:2.4px solid #dfe2e5;border-radius:2px;"></div>
<div style="top:892.0px;height:40px;line-height:40px;font-size:27px;color:#dfe2e5;white-space:nowrap;left:1851.0px;width:40px;text-align:center;">{</div>
<div style="top:892.0px;height:40px;line-height:40px;font-size:27px;color:#dfe2e5;white-space:nowrap;left:1914.0px;width:40px;text-align:center;">}</div>
<svg style="left:1980px;top:901px;" width="36" height="28" viewBox="0 0 36 28"><g fill="none" stroke="#4c535c" stroke-width="1.8" stroke-linecap="round" stroke-linejoin="round"><path d="M2 2H8M5 2V23M2 23H8"/><rect x="13" y="4" width="14" height="9" rx="1"/><path d="M29 9L33 13M24 19H14M17.5 15.5L14 19L17.5 22.5"/></g></svg>
<svg style="left:2037px;top:900px;" width="36" height="30" viewBox="0 0 36 30"><g fill="none" stroke="#dfe2e5" stroke-width="2.2" stroke-linejoin="round"><rect x="1.5" y="1.5" width="28" height="19" rx="1.5"/><path d="M15.5 20.5V27M9 27.5H22" stroke-linecap="round"/></g><path d="M23 17.5H36.5L29.75 26.5Z" fill="#dfe2e5" stroke="#20262d" stroke-width="2.4"/></svg>
<svg style="left:2101px;top:900px;" width="30" height="27" viewBox="0 0 30 27"><path d="M2 7.5Q2 5.5 4 5.5H8L10 2H20L22 5.5H26Q28 5.5 28 7.5V23Q28 25 26 25H4Q2 25 2 23Z" fill="none" stroke="#dfe2e5" stroke-width="2.2" stroke-linejoin="round"/><circle cx="15" cy="14.5" r="6" fill="none" stroke="#dfe2e5" stroke-width="2.2"/></svg>
<svg style="left:2160px;top:900px;" width="36" height="29" viewBox="0 0 36 29"><path d="M2 9.5H8L17 2.5V26.5L8 19.5H2Z" fill="none" stroke="#dfe2e5" stroke-width="2.2" stroke-linejoin="round"/><path d="M22.5 9Q26 14.5 22.5 20M27.5 5Q33.5 14.5 27.5 24" fill="none" stroke="#dfe2e5" stroke-width="2.2" stroke-linecap="round"/></svg>
<svg style="left:2223px;top:901px;" width="26" height="26" viewBox="0 0 26 26"><g fill="none" stroke="#dfe2e5" stroke-width="2.2" stroke-linecap="round" stroke-linejoin="round"><path d="M2 9V2H9M2 2L10.5 10.5M24 17V24H17M24 24L15.5 15.5"/></g></svg>
<div style="left:2304px;top:80px;width:552px;height:1530px;border-radius:22px 22px 0 0;overflow:hidden;background:#20262d;">
<div class="hdr" style="left:0px;top:0px;width:552px;height:80px;"></div>
<svg style="left:0;top:0" width="170" height="80" viewBox="0 0 170 80"><path d="M0 80Q20 80 20 64V22Q20 8 34 8H132Q146 8 146 22V64Q146 80 166 80Z" fill="#20262d"/></svg>
</div>
<div style="top:107.0px;height:36px;line-height:36px;font-size:24px;color:#50e0b8;white-space:nowrap;left:2317.0px;width:140px;text-align:center;">项目信息</div>
<div style="top:191.5px;height:36px;line-height:36px;font-size:24px;color:#e6e9ec;white-space:nowrap;left:2337px;">项目名称<span style="margin-left:3px">:</span></div>
<div style="top:191.5px;height:36px;line-height:36px;font-size:24px;color:#e6e9ec;white-space:nowrap;left:2488px;">未命名项目</div>
<div style="top:257.5px;height:36px;line-height:36px;font-size:24px;color:#e6e9ec;white-space:nowrap;left:2337px;">项目文件位</div>
<div style="top:255.5px;height:38px;line-height:38px;font-size:25px;color:#e6e9ec;white-space:nowrap;letter-spacing:0.2px;left:2488px;">/</div>
<div style="top:355.5px;height:36px;line-height:36px;font-size:24px;color:#e6e9ec;white-space:nowrap;left:2337px;">分辨率<span style="margin-left:3px">:</span></div>
<div style="top:353.5px;height:38px;line-height:38px;font-size:25px;color:#e6e9ec;white-space:nowrap;letter-spacing:0.2px;left:2488px;">1920 x 1080</div>
<div style="top:419.5px;height:36px;line-height:36px;font-size:24px;color:#e6e9ec;white-space:nowrap;left:2337px;">帧率<span style="margin-left:3px">:</span></div>
<div style="top:417.5px;height:38px;line-height:38px;font-size:25px;color:#e6e9ec;white-space:nowrap;letter-spacing:0.2px;left:2488px;">25fps</div>
<div style="top:483.5px;height:36px;line-height:36px;font-size:24px;color:#e6e9ec;white-space:nowrap;left:2337px;">色彩空间<span style="margin-left:3px">:</span></div>
<div style="top:481.5px;height:38px;line-height:38px;font-size:25px;color:#e6e9ec;white-space:nowrap;letter-spacing:-0.3px;left:2488px;">SDR - Rec.709</div>
<div style="top:549.5px;height:36px;line-height:36px;font-size:24px;color:#e6e9ec;white-space:nowrap;left:2337px;">时长<span style="margin-left:3px">:</span></div>
<div style="top:547.5px;height:38px;line-height:38px;font-size:25px;color:#e6e9ec;white-space:nowrap;letter-spacing:0.85px;left:2488px;">00:00:10:02</div>
<div style="top:614.5px;height:36px;line-height:36px;font-size:24px;color:#e6e9ec;white-space:nowrap;left:2337px;">封面图<span style="margin-left:3px">:</span></div>
<div style="top:290.5px;height:36px;line-height:36px;font-size:24px;color:#e6e9ec;white-space:nowrap;left:2337px;">置<span style="margin-left:3px">:</span></div>
<div style="left:2488px;top:632px;width:192px;height:107px;border-radius:11px;border:1.5px solid #37433f;background:#232a30;"></div>
<div style="left:2559px;top:665px;width:49px;height:39px;border-radius:5px;background:linear-gradient(#6f8e88,#3f5a57);"></div>
<svg style="left:2570px;top:672px;" width="28" height="26" viewBox="0 0 28 26"><path d="M3 21.5H24" stroke="#e8f0ee" stroke-width="3"/><path d="M4 18L6 12L17 3L21.5 8L10 17Z" fill="#eef4f2"/><path d="M14.5 5.2L19 10" stroke="#4f6d69" stroke-width="1.6"/></svg>
<div style="left:2530px;top:705px;width:108px;height:3px;background:radial-gradient(closest-side,#14191d,rgba(20,25,29,0));"></div>
<div style="left:2559px;top:708px;width:49px;height:8px;background:linear-gradient(rgba(90,120,115,.35),rgba(90,120,115,0));"></div>
<div style="left:2488px;top:764px;width:124px;height:48px;border-radius:11px;background:#353b44;"></div>
<div style="top:770.0px;height:36px;line-height:36px;font-size:24px;color:#c9cdd2;white-space:nowrap;left:2488.0px;width:124px;text-align:center;">编辑</div>
<div style="left:24px;top:970px;width:2264px;height:640px;border-radius:22px 22px 0 0;overflow:hidden;background:#1c2226;">
<div class="hdr" style="left:0px;top:0px;width:2264px;height:80px;"></div>
<div style="left:0px;top:80px;width:256px;height:80px;background:#20262d;"></div>
<div style="left:256px;top:80px;width:2008px;height:80px;background:#1f252b;"></div>
<div style="left:0px;top:160px;width:256px;height:140px;background:#1d2428;"></div>
<div style="left:0px;top:300px;width:256px;height:140px;background:#20262d;"></div>
<div style="left:256px;top:300px;width:2008px;height:140px;background:#1f252c;"></div>
<div style="left:0px;top:440px;width:256px;height:140px;background:#1d2428;"></div>
<div style="left:0px;top:580px;width:256px;height:100px;background:#20262d;"></div>
<div style="left:256px;top:580px;width:2008px;height:100px;background:#1f252c;"></div>
<div style="left:2240px;top:160px;width:24px;height:520px;background:#20262d;"></div>
</div>
<svg style="left:44.5px;top:989.5px;" width="39" height="39" viewBox="0 0 24 24" fill="none" stroke="#36d8b0" stroke-width="1.9" stroke-linecap="round" stroke-linejoin="round"><path d="M12 2.6L3.2 9.4Q2.6 9.9 2.8 10.7L4.6 19.2Q4.9 20.6 6.4 20.6H17.6Q19.1 20.6 19.4 19.2L21.2 10.7Q21.4 9.9 20.8 9.4Z"/><circle cx="12" cy="13.6" r="2.6"/></svg>
<div style="top:990.5px;height:39px;line-height:39px;font-size:26px;color:#d9dcdf;white-space:nowrap;left:121px;">主时间线</div>
<svg style="left:286px;top:1007px;" width="12" height="8" viewBox="0 0 12 8"><path d="M0.5 0.5H11.5L6 7.5Z" fill="#9096a0"/></svg>
<div style="left:366px;top:994px;width:2px;height:32px;background:#4a515a;"></div>
<svg style="left:423.0px;top:993.0px;" width="34" height="34" viewBox="0 0 24 24" fill="none" stroke="#d5d8dc" stroke-width="1.6" stroke-linecap="round" stroke-linejoin="round"><rect x="3" y="3" width="7" height="7"/><rect x="3" y="14" width="7" height="7"/><rect x="14" y="14" width="7" height="7"/><path d="M17.5 2L22 6.5L17.5 11L13 6.5Z"/></svg>
<svg style="left:488.0px;top:993.0px;" width="34" height="34" viewBox="0 0 24 24" fill="none" stroke="#d5d8dc" stroke-width="1.6" stroke-linecap="round" stroke-linejoin="round"><path d="M4 3L19 9.5L12.5 12L17.5 18.5L15 20.5L10 14L6.5 19Z"/><path d="M19 23.5H23.5V19Z" fill="#d5d8dc" stroke-width=".6"/></svg>
<div style="left:560px;top:994px;width:2px;height:32px;background:#4a515a;"></div>
<svg style="left:601.0px;top:993.0px;" width="34" height="34" viewBox="0 0 24 24" fill="none" stroke="#d5d8dc" stroke-width="1.7" stroke-linecap="round" stroke-linejoin="round"><path d="M9 4L3 10L9 15.5V12Q17 11.5 20 18Q19.5 8.5 9 7.5Z"/></svg>
<svg style="left:680.0px;top:993.0px;" width="34" height="34" viewBox="0 0 24 24" fill="none" stroke="#4a515a" stroke-width="1.7" stroke-linecap="round" stroke-linejoin="round"><path d="M15 4L21 10L15 15.5V12Q7 11.5 4 18Q4.5 8.5 15 7.5Z"/></svg>
<svg style="left:759.0px;top:993.0px;" width="36" height="36" viewBox="0 0 24 24" fill="none" stroke="#4a515a" stroke-width="1.6" stroke-linecap="round" stroke-linejoin="round"><path d="M4 6H20M9 3.5H15M6.5 6V20.5H17.5V6M10 10V17M14 10V17"/></svg>
<svg style="left:839.0px;top:993.0px;" width="36" height="36" viewBox="0 0 24 24" fill="none" stroke="#4a515a" stroke-width="1.6" stroke-linecap="round" stroke-linejoin="round"><circle cx="6.5" cy="18" r="3.3"/><circle cx="17.5" cy="18" r="3.3"/><path d="M8.3 15.2L15.5 2.5M15.7 15.2L8.5 2.5"/></svg>
<svg style="left:921.0px;top:994.0px;" width="34" height="34" viewBox="0 0 24 24" fill="none" stroke="#d5d8dc" stroke-width="1.8" stroke-linecap="round" stroke-linejoin="round"><path d="M3 8V5H19.5V8M11.2 5V21M7.5 21.3H15" stroke-linejoin="miter"/><path d="M20 23.5H24.5V19Z" fill="#d5d8dc" stroke-width=".6"/></svg>
<svg style="left:1003.0px;top:994.0px;" width="34" height="34" viewBox="0 0 24 24" fill="none" stroke="#d5d8dc" stroke-width="1.9" stroke-linecap="round" stroke-linejoin="round"><rect x="3" y="5" width="16.5" height="15" rx="2.8"/><path d="M20 23.5H24.5V19Z" fill="#d5d8dc" stroke-width=".6"/></svg>
<svg style="left:1083.0px;top:995.0px;" width="30" height="30" viewBox="0 0 24 24" fill="none" stroke="#d5d8dc" stroke-width="1.9" stroke-linecap="round" stroke-linejoin="round"><path d="M4 4L11 12L4 20M13 4L20 12L13 20"/></svg>
<svg style="left:1274.0px;top:992.0px;" width="36" height="36" viewBox="0 0 24 24" fill="none" stroke="#d5d8dc" stroke-width="1.8" stroke-linecap="round" stroke-linejoin="round"><circle cx="12" cy="12" r="9.4" stroke-dasharray="0.1 4.82" stroke-width="2.3"/><path d="M9.5 7.8V16.2L16.3 12Z" stroke-width="1.4" fill="#d5d8dc"/></svg>
<svg style="left:1356.0px;top:994.0px;" width="32" height="32" viewBox="0 0 24 24" fill="none" stroke="#d5d8dc" stroke-width="1.7" stroke-linecap="round" stroke-linejoin="round"><path d="M5 3H19V15.5L12 21L5 15.5Z"/></svg>
<svg style="left:1435.0px;top:994.0px;" width="32" height="32" viewBox="0 0 24 24" fill="none" stroke="#d5d8dc" stroke-width="1.6" stroke-linecap="round" stroke-linejoin="round"><rect x="8.5" y="2.5" width="7" height="12" rx="3.5"/><path d="M5 11.5A7 7 0 0 0 19 11.5M12 18.5V21.5M8.5 21.5H15.5"/></svg>
<svg style="left:1516.0px;top:994.0px;" width="32" height="32" viewBox="0 0 24 24" fill="none" stroke="#d5d8dc" stroke-width="1.7" stroke-linecap="round" stroke-linejoin="round"><path d="M3 4H18M3 8.5H13M3 13H10M3 17.5H8"/><path d="M19 4V17"/><ellipse cx="15.8" cy="18" rx="3.6" ry="3.2" fill="#d5d8dc"/></svg>
<svg style="left:1592.0px;top:991.0px;" width="38" height="38" viewBox="0 0 24 24" fill="none" stroke="#d5d8dc" stroke-width="1.4" stroke-linecap="round" stroke-linejoin="round"><path d="M6 2.5V5M6 18V21.5" stroke-dasharray="1.5 2"/><path d="M6 5H17Q19 5 19 7V10.5M6 5H4Q2.5 5 2.5 6.5V16.5Q2.5 18 4 18H11" /><path d="M12 17.5Q17 12 22.5 17.5Q17 23 12 17.5Z"/><circle cx="17.2" cy="17.5" r="1.4" fill="#d5d8dc"/></svg>
<svg style="left:1675.0px;top:994.0px;" width="32" height="32" viewBox="0 0 24 24" fill="none" stroke="#d5d8dc" stroke-width="1.7" stroke-linecap="round" stroke-linejoin="round"><rect x="2.5" y="4.5" width="19" height="15" rx="1.5"/><path d="M7 12H17M9.5 9.5L7 12L9.5 14.5M14.5 9.5L17 12L14.5 14.5" stroke-width="1.5"/></svg>
<svg style="left:1756.0px;top:994.0px;" width="34" height="34" viewBox="0 0 24 24" fill="none" stroke="#f4f6f8" stroke-width="1.6" stroke-linecap="round" stroke-linejoin="round"><circle cx="12" cy="12" r="10"/><path d="M7.5 12H16.5"/></svg>
<div style="left:1808px;top:1008px;width:124px;height:4px;border-radius:2px;background:#d5d8dc;"></div>
<div style="left:1932px;top:1008px;width:56px;height:4px;border-radius:2px;background:#2b323a;"></div>
<div style="left:1921.5px;top:999.5px;width:21px;height:21px;border-radius:50%;background:#555c66;border:3.2px solid #c3c9d1;"></div>
<svg style="left:2008.0px;top:994.0px;" width="34" height="34" viewBox="0 0 24 24" fill="none" stroke="#f4f6f8" stroke-width="1.6" stroke-linecap="round" stroke-linejoin="round"><circle cx="12" cy="12" r="10"/><path d="M7.5 12H16.5M12 7.5V16.5"/></svg>
<div style="left:2154px;top:988px;width:12.5px;height:6px;border-radius:2px;background:#3d444d;"></div>
<div style="left:2170px;top:988px;width:12.5px;height:6px;border-radius:2px;background:#3d444d;"></div>
<div style="left:2154px;top:998px;width:12.5px;height:6px;border-radius:2px;background:#3d444d;"></div>
<div style="left:2170px;top:998px;width:12.5px;height:6px;border-radius:2px;background:#3d444d;"></div>
<div style="left:2154px;top:1008px;width:12.5px;height:6px;border-radius:2px;background:#3d444d;"></div>
<div style="left:2170px;top:1008px;width:12.5px;height:6px;border-radius:2px;background:#3d444d;"></div>
<div style="left:2154px;top:1018px;width:12.5px;height:6px;border-radius:2px;background:#3d444d;"></div>
<div style="left:2170px;top:1018px;width:12.5px;height:6px;border-radius:2px;background:#3d444d;"></div>
<div style="left:2154px;top:1028px;width:12.5px;height:6px;border-radius:2px;background:#3d444d;"></div>
<div style="left:2170px;top:1028px;width:12.5px;height:6px;border-radius:2px;background:#3d444d;"></div>
<svg style="left:2210px;top:1008px;" width="12" height="8" viewBox="0 0 12 8"><path d="M0.5 0.5H11.5L6 7.5Z" fill="#6f767f"/></svg>
<svg style="left:44px;top:1070px" width="40" height="40" viewBox="44 1070 40 40" fill="none" stroke-linecap="round" stroke-linejoin="round"><rect x="49" y="1077" width="19.6" height="20" stroke="#d0d4da" stroke-width="2" stroke-linejoin="miter"/><rect x="57.3" y="1083" width="19.7" height="20" fill="#20262d" stroke="#d0d4da" stroke-width="2" stroke-linejoin="miter"/><path d="M67.1 1088.3V1097.9M62.3 1093.1H71.9" stroke="#d0d4da" stroke-width="2" stroke-linecap="butt"/></svg>
<svg style="left:102px;top:1074px" width="44" height="34" viewBox="102 1074 44 34" fill="none" stroke-linecap="round" stroke-linejoin="round"><path d="M118.5 1086.5V1085.5Q118.5 1083.3 116.3 1083.3H110.5Q107.2 1083.3 107.2 1086.6V1095.6Q107.2 1098.9 110.5 1098.9H116.3Q118.5 1098.9 118.5 1096.7V1095.7" stroke="#d0d4da" stroke-width="2.2"/><path d="M123.2 1086V1085Q123.2 1081.2 127 1081.2H137Q140.8 1081.2 140.8 1085V1097Q140.8 1100.8 137 1100.8H127Q123.2 1100.8 123.2 1097V1096" stroke="#d0d4da" stroke-width="2.2"/><path d="M112.5 1091H131.5M127.5 1086.8L132 1091L127.5 1095.2" stroke="#d0d4da" stroke-width="2.2"/></svg>
<svg style="left:164px;top:1072px" width="42" height="38" viewBox="164 1072 42 38" fill="none" stroke-linecap="round" stroke-linejoin="round"><g stroke="#2f7a69" stroke-width="2.3"><path d="M178 1089.7H174.5Q169.5 1089.7 169.5 1084.2T174.5 1078.6H188Q193 1078.6 193 1084.2T188 1089.7H184.5"/><path d="M178 1092.6H174.5Q169.5 1092.6 169.5 1098.1T174.5 1103.7H194Q199 1103.7 199 1098.1T194 1092.6H184.5"/><path d="M181.2 1086.2V1095.6"/></g></svg>
<svg style="left:226px;top:1068px" width="36" height="42" viewBox="226 1068 36 42" fill="none" stroke-linecap="round" stroke-linejoin="round"><g stroke="#4ef0c8" stroke-width="2.3"><rect x="231.2" y="1084.6" width="26" height="9.2" rx="4.6"/><path d="M243.4 1073V1079M243.4 1099.4V1105.4M234 1077.2L238 1080.2M253 1077.2L249 1080.2M234 1101.2L238 1098.2M253 1101.2L249 1098.2"/></g><path d="M243.4 1084V1094.4" stroke="#20262d" stroke-width="4.6" stroke-linecap="butt"/><path d="M243.4 1084V1094.4" stroke="#4ef0c8" stroke-width="1.6" stroke-linecap="butt"/></svg>
<svg style="left:0px;top:0px;pointer-events:none;" width="2288" height="1612" viewBox="0 0 2288 1612"><rect x="287.0" y="1120" width="1.2" height="7" fill="#bfc4ca"/><rect x="326.2" y="1120" width="1.2" height="7" fill="#bfc4ca"/><rect x="365.4" y="1120" width="1.2" height="7" fill="#bfc4ca"/><rect x="404.6" y="1120" width="1.2" height="7" fill="#bfc4ca"/><rect x="443.8" y="1110" width="1.2" height="17" fill="#bfc4ca"/><rect x="483.0" y="1120" width="1.2" height="7" fill="#bfc4ca"/><rect x="522.2" y="1120" width="1.2" height="7" fill="#bfc4ca"/><rect x="561.4" y="1120" width="1.2" height="7" fill="#bfc4ca"/><rect x="600.7" y="1120" width="1.2" height="7" fill="#bfc4ca"/><rect x="639.9" y="1110" width="1.2" height="17" fill="#bfc4ca"/><rect x="679.1" y="1120" width="1.2" height="7" fill="#bfc4ca"/><rect x="718.3" y="1120" width="1.2" height="7" fill="#bfc4ca"/><rect x="757.5" y="1120" width="1.2" height="7" fill="#bfc4ca"/><rect x="796.7" y="1120" width="1.2" height="7" fill="#bfc4ca"/><rect x="835.9" y="1110" width="1.2" height="17" fill="#bfc4ca"/><rect x="875.1" y="1120" width="1.2" height="7" fill="#bfc4ca"/><rect x="914.3" y="1120" width="1.2" height="7" fill="#bfc4ca"/><rect x="953.5" y="1120" width="1.2" height="7" fill="#bfc4ca"/><rect x="992.7" y="1120" width="1.2" height="7" fill="#bfc4ca"/><rect x="1031.9" y="1110" width="1.2" height="17" fill="#bfc4ca"/><rect x="1071.1" y="1120" width="1.2" height="7" fill="#bfc4ca"/><rect x="1110.3" y="1120" width="1.2" height="7" fill="#bfc4ca"/><rect x="1149.5" y="1120" width="1.2" height="7" fill="#bfc4ca"/><rect x="1188.7" y="1120" width="1.2" height="7" fill="#bfc4ca"/><rect x="1228.0" y="1110" width="1.2" height="17" fill="#bfc4ca"/><rect x="1267.2" y="1120" width="1.2" height="7" fill="#bfc4ca"/><rect x="1306.4" y="1120" width="1.2" height="7" fill="#bfc4ca"/><rect x="1345.6" y="1120" width="1.2" height="7" fill="#bfc4ca"/><rect x="1384.8" y="1120" width="1.2" height="7" fill="#bfc4ca"/><rect x="1424.0" y="1110" width="1.2" height="17" fill="#bfc4ca"/><rect x="1463.2" y="1120" width="1.2" height="7" fill="#bfc4ca"/><rect x="1502.4" y="1120" width="1.2" height="7" fill="#bfc4ca"/><rect x="1541.6" y="1120" width="1.2" height="7" fill="#bfc4ca"/><rect x="1580.8" y="1120" width="1.2" height="7" fill="#bfc4ca"/><rect x="1620.0" y="1110" width="1.2" height="17" fill="#bfc4ca"/><rect x="1659.2" y="1120" width="1.2" height="7" fill="#bfc4ca"/><rect x="1698.4" y="1120" width="1.2" height="7" fill="#bfc4ca"/><rect x="1737.6" y="1120" width="1.2" height="7" fill="#bfc4ca"/><rect x="1776.8" y="1120" width="1.2" height="7" fill="#bfc4ca"/><rect x="1816.0" y="1110" width="1.2" height="17" fill="#bfc4ca"/><rect x="1855.2" y="1120" width="1.2" height="7" fill="#bfc4ca"/><rect x="1894.5" y="1120" width="1.2" height="7" fill="#bfc4ca"/><rect x="1933.7" y="1120" width="1.2" height="7" fill="#bfc4ca"/><rect x="1972.9" y="1120" width="1.2" height="7" fill="#bfc4ca"/><rect x="2012.1" y="1110" width="1.2" height="17" fill="#bfc4ca"/><rect x="2051.3" y="1120" width="1.2" height="7" fill="#bfc4ca"/><rect x="2090.5" y="1120" width="1.2" height="7" fill="#bfc4ca"/><rect x="2129.7" y="1120" width="1.2" height="7" fill="#bfc4ca"/><rect x="2168.9" y="1120" width="1.2" height="7" fill="#bfc4ca"/><rect x="2208.1" y="1110" width="1.2" height="17" fill="#bfc4ca"/><rect x="2247.3" y="1120" width="1.2" height="7" fill="#bfc4ca"/></svg>
<div style="top:1075.5px;height:37px;line-height:37px;font-size:24.5px;color:#d0d3d8;white-space:nowrap;letter-spacing:0.95px;left:342.63px;width:200px;text-align:center;">00:00:01:00</div>
<div style="top:1075.5px;height:37px;line-height:37px;font-size:24.5px;color:#d0d3d8;white-space:nowrap;letter-spacing:0.95px;left:538.6600000000001px;width:200px;text-align:center;">00:00:02:00</div>
<div style="top:1075.5px;height:37px;line-height:37px;font-size:24.5px;color:#d0d3d8;white-space:nowrap;letter-spacing:0.95px;left:734.69px;width:200px;text-align:center;">00:00:03:00</div>
<div style="top:1075.5px;height:37px;line-height:37px;font-size:24.5px;color:#d0d3d8;white-space:nowrap;letter-spacing:0.95px;left:930.72px;width:200px;text-align:center;">00:00:04:00</div>
<div style="top:1075.5px;height:37px;line-height:37px;font-size:24.5px;color:#d0d3d8;white-space:nowrap;letter-spacing:0.95px;left:1126.75px;width:200px;text-align:center;">00:00:05:00</div>
<div style="top:1075.5px;height:37px;line-height:37px;font-size:24.5px;color:#d0d3d8;white-space:nowrap;letter-spacing:0.95px;left:1322.7800000000002px;width:200px;text-align:center;">00:00:06:00</div>
<div style="top:1075.5px;height:37px;line-height:37px;font-size:24.5px;color:#d0d3d8;white-space:nowrap;letter-spacing:0.95px;left:1518.8100000000002px;width:200px;text-align:center;">00:00:07:00</div>
<div style="top:1075.5px;height:37px;line-height:37px;font-size:24.5px;color:#d0d3d8;white-space:nowrap;letter-spacing:0.95px;left:1714.8400000000001px;width:200px;text-align:center;">00:00:08:00</div>
<div style="top:1075.5px;height:37px;line-height:37px;font-size:24.5px;color:#d0d3d8;white-space:nowrap;letter-spacing:0.95px;left:1910.8700000000001px;width:200px;text-align:center;">00:00:09:00</div>
<div style="top:1075.5px;height:37px;line-height:37px;font-size:24.5px;color:#d0d3d8;white-space:nowrap;letter-spacing:0.95px;left:2106.8999999999996px;width:200px;text-align:center;">00:00:10:00</div>
<div style="left:304px;top:1126px;width:878px;height:4px;background:#fb6162;"></div>
<div style="left:1236px;top:1126px;width:926px;height:4px;background:#fb6162;"></div>
<svg style="left:41px;top:1306px;" width="30" height="28" viewBox="0 0 30 28"><rect x="1" y="1" width="28" height="26" rx="6" fill="#d5d8dc"/><path d="M1 9.5H29M8 1V9.5M16.5 1V9.5" stroke="#20262d" stroke-width="2"/><path d="M11.5 13V23L20 18Z" fill="#20262d"/></svg>
<div style="top:1303.0px;height:30px;line-height:30px;font-size:20px;color:#d5d8dc;white-space:nowrap;left:74px;">2</div>
<svg style="left:109.0px;top:1306.0px;" width="28" height="28" viewBox="0 0 24 24" fill="none" stroke="#d5d8dc" stroke-width="1.7" stroke-linecap="round" stroke-linejoin="round"><rect x="4.5" y="9.6" width="16" height="11" rx="1"/><path d="M7.8 9.6V6.2A3.3 3.3 0 0 1 14.2 5.2"/><circle cx="12.5" cy="15" r="1.2" fill="#d5d8dc" stroke-width="1"/></svg>
<svg style="left:174px;top:1308px;" width="30" height="24" viewBox="0 0 30 24"><path d="M2 8H6.5L13 2.5V21.5L6.5 16H2Z" fill="none" stroke="#d5d8dc" stroke-width="2" stroke-linejoin="round"/><path d="M17 8Q19.5 12 17 16M21 5Q25.5 12 21 19" fill="none" stroke="#d5d8dc" stroke-width="1.9" stroke-linecap="round"/></svg>
<svg style="left:235px;top:1311px;" width="26" height="18" viewBox="0 0 26 18"><path d="M1.5 9Q13 -5 24.5 9Q13 23 1.5 9Z" fill="none" stroke="#e4e8ee" stroke-width="2.1" stroke-linejoin="round"/><circle cx="13" cy="9" r="4.3" fill="#e8eefa"/></svg>
<div style="top:1345.0px;height:30px;line-height:30px;font-size:20px;color:#8c929a;white-space:nowrap;letter-spacing:0.5px;left:48px;">视频 2</div>
<svg style="left:41px;top:1446px;" width="30" height="28" viewBox="0 0 30 28"><rect x="1" y="1" width="28" height="26" rx="6" fill="#d5d8dc"/><path d="M1 9.5H29M8 1V9.5M16.5 1V9.5" stroke="#20262d" stroke-width="2"/><path d="M11.5 13V23L20 18Z" fill="#20262d"/></svg>
<div style="top:1443.0px;height:30px;line-height:30px;font-size:20px;color:#d5d8dc;white-space:nowrap;left:74px;">1</div>
<svg style="left:109.0px;top:1446.0px;" width="28" height="28" viewBox="0 0 24 24" fill="none" stroke="#d5d8dc" stroke-width="1.7" stroke-linecap="round" stroke-linejoin="round"><rect x="4.5" y="9.6" width="16" height="11" rx="1"/><path d="M7.8 9.6V6.2A3.3 3.3 0 0 1 14.2 5.2"/><circle cx="12.5" cy="15" r="1.2" fill="#d5d8dc" stroke-width="1"/></svg>
<svg style="left:174px;top:1448px;" width="30" height="24" viewBox="0 0 30 24"><path d="M2 8H6.5L13 2.5V21.5L6.5 16H2Z" fill="none" stroke="#d5d8dc" stroke-width="2" stroke-linejoin="round"/><path d="M17 8Q19.5 12 17 16M21 5Q25.5 12 21 19" fill="none" stroke="#d5d8dc" stroke-width="1.9" stroke-linecap="round"/></svg>
<svg style="left:235px;top:1451px;" width="26" height="18" viewBox="0 0 26 18"><path d="M1.5 9Q13 -5 24.5 9Q13 23 1.5 9Z" fill="none" stroke="#e4e8ee" stroke-width="2.1" stroke-linejoin="round"/><circle cx="13" cy="9" r="4.3" fill="#e8eefa"/></svg>
<div style="top:1485.0px;height:30px;line-height:30px;font-size:20px;color:#8c929a;white-space:nowrap;letter-spacing:0.5px;left:48px;">视频 1</div>
<svg style="left:41px;top:1562px;" width="30" height="28" viewBox="0 0 30 28"><path d="M9 22V7L26 2V18" fill="none" stroke="#d5d8dc" stroke-width="3.6" stroke-linejoin="round"/><path d="M9 7L26 2V8L9 13Z" fill="#d5d8dc"/><ellipse cx="6" cy="22" rx="5" ry="4" fill="#d5d8dc"/><ellipse cx="22.5" cy="18.5" rx="4.6" ry="3.8" fill="#d5d8dc"/></svg>
<div style="top:1559.0px;height:30px;line-height:30px;font-size:20px;color:#d5d8dc;white-space:nowrap;left:74px;">1</div>
<svg style="left:109.0px;top:1562.0px;" width="28" height="28" viewBox="0 0 24 24" fill="none" stroke="#d5d8dc" stroke-width="1.7" stroke-linecap="round" stroke-linejoin="round"><rect x="4.5" y="9.6" width="16" height="11" rx="1"/><path d="M7.8 9.6V6.2A3.3 3.3 0 0 1 14.2 5.2"/><circle cx="12.5" cy="15" r="1.2" fill="#d5d8dc" stroke-width="1"/></svg>
<svg style="left:174px;top:1564px;" width="30" height="24" viewBox="0 0 30 24"><path d="M2 8H6.5L13 2.5V21.5L6.5 16H2Z" fill="none" stroke="#d5d8dc" stroke-width="2" stroke-linejoin="round"/><path d="M17 8Q19.5 12 17 16M21 5Q25.5 12 21 19" fill="none" stroke="#d5d8dc" stroke-width="1.9" stroke-linecap="round"/></svg>
<div style="left:280px;top:1274px;width:955px;height:132px;border-radius:0 10px 10px 0;overflow:hidden;background:#12302b;box-shadow:inset 0 0 0 1.5px #2d6a60;">
<svg style="left:-30px;top:0px;overflow:hidden;" width="140" height="82" preserveAspectRatio="none"><use href="#tfP" width="140" height="82"/></svg>
<svg style="left:110px;top:0px;overflow:hidden;" width="140" height="82" preserveAspectRatio="none"><use href="#tfJ1" width="140" height="82"/></svg>
<svg style="left:250px;top:0px;overflow:hidden;" width="140" height="82" preserveAspectRatio="none"><use href="#tfJ2" width="140" height="82"/></svg>
<svg style="left:390px;top:0px;overflow:hidden;" width="140" height="82" preserveAspectRatio="none"><use href="#tfS" width="140" height="82"/></svg>
<svg style="left:530px;top:0px;overflow:hidden;" width="140" height="82" preserveAspectRatio="none"><use href="#tfR" width="140" height="82"/></svg>
<svg style="left:670px;top:0px;overflow:hidden;" width="140" height="82" preserveAspectRatio="none"><use href="#tfN" width="140" height="82"/></svg>
<svg style="left:810px;top:0px;overflow:hidden;" width="140" height="82" preserveAspectRatio="none"><use href="#tfJ2" width="140" height="82"/></svg>
<svg style="left:950px;top:0px;overflow:hidden;" width="140" height="82" preserveAspectRatio="none"><use href="#tfP" width="140" height="82"/></svg>
<div style="left:0px;top:97px;width:955px;height:4px;background:#7fe9d2;"></div>
<div style="left:0px;top:0px;width:955px;height:132px;border-radius:0 10px 10px 0;box-shadow:inset 0 0 0 1.5px #2d6a60;"></div>
</div>
<div style="left:304px;top:1414px;width:878px;height:132px;border-radius:10px;overflow:hidden;background:#12302b;box-shadow:inset 0 0 0 1.5px #2d7a6c;">
<svg style="left:0px;top:0px;overflow:hidden;" width="140" height="82" preserveAspectRatio="none"><use href="#tfL" width="140" height="82"/></svg>
<svg style="left:140px;top:0px;overflow:hidden;" width="140" height="82" preserveAspectRatio="none"><use href="#tfJ3" width="140" height="82"/></svg>
<svg style="left:280px;top:0px;overflow:hidden;" width="140" height="82" preserveAspectRatio="none"><use href="#tfJ4" width="140" height="82"/></svg>
<svg style="left:420px;top:0px;overflow:hidden;" width="140" height="82" preserveAspectRatio="none"><use href="#tfB" width="140" height="82"/></svg>
<svg style="left:560px;top:0px;overflow:hidden;" width="140" height="82" preserveAspectRatio="none"><use href="#tfN2" width="140" height="82"/></svg>
<svg style="left:700px;top:0px;overflow:hidden;" width="140" height="82" preserveAspectRatio="none"><use href="#tfJ4" width="140" height="82"/></svg>
<svg style="left:840px;top:0px;overflow:hidden;" width="140" height="82" preserveAspectRatio="none"><use href="#tfJ1" width="140" height="82"/></svg>
<div style="left:0px;top:97px;width:878px;height:4px;background:#7fe9d2;"></div>
<div style="left:0px;top:0px;width:878px;height:132px;border-radius:10px;box-shadow:inset 0 0 0 1.5px #2d7a6c;"></div>
</div>
<div style="left:1236px;top:1414px;width:523px;height:132px;border-radius:10px;overflow:hidden;background:#27392b;box-shadow:inset 0 0 0 1.5px #3f6b48;">
<svg style="left:0px;top:0px;overflow:hidden;" width="140" height="82" preserveAspectRatio="none"><use href="#tfL" width="140" height="82"/></svg>
<svg style="left:140px;top:0px;overflow:hidden;" width="140" height="82" preserveAspectRatio="none"><use href="#tfJ3" width="140" height="82"/></svg>
<svg style="left:280px;top:0px;overflow:hidden;" width="140" height="82" preserveAspectRatio="none"><use href="#tfJ4" width="140" height="82"/></svg>
<svg style="left:420px;top:0px;overflow:hidden;" width="140" height="82" preserveAspectRatio="none"><use href="#tfB" width="140" height="82"/></svg>
<div style="left:0px;top:97px;width:523px;height:4px;background:#4db860;"></div>
<div style="left:0px;top:0px;width:523px;height:132px;border-radius:10px;box-shadow:inset 0 0 0 1.5px #3f6b48;"></div>
</div>
<div style="left:1764px;top:1414px;width:398px;height:132px;border-radius:10px;overflow:hidden;background:#27392b;box-shadow:inset 0 0 0 1.5px #3f6b48;">
<svg style="left:-3px;top:0px;overflow:hidden;" width="140" height="82" preserveAspectRatio="none"><use href="#tfN2" width="140" height="82"/></svg>
<svg style="left:137px;top:0px;overflow:hidden;" width="140" height="82" preserveAspectRatio="none"><use href="#tfJ5" width="140" height="82"/></svg>
<svg style="left:277px;top:0px;overflow:hidden;" width="140" height="82" preserveAspectRatio="none"><use href="#tfN3" width="140" height="82"/></svg>
<div style="left:0px;top:97px;width:398px;height:4px;background:#4db860;"></div>
<div style="left:0px;top:0px;width:398px;height:132px;border-radius:10px;box-shadow:inset 0 0 0 1.5px #3f6b48;"></div>
</div>
<svg style="left:298px;top:1290px;" width="29" height="30" viewBox="0 0 29 30"><rect x="1" y="1" width="27" height="28" rx="5.5" fill="rgba(232,236,240,.88)" stroke="#f4f6f8" stroke-width="1.4"/><path d="M10 8V22L21 15Z" fill="#7088aa"/></svg>
<div style="top:1285.0px;height:36px;line-height:36px;font-size:24px;color:#f4f6f8;white-space:nowrap;letter-spacing:0.8px;left:336px;text-shadow:0 1px 3px rgba(0,0,0,.55);">My Video</div>
<svg style="left:321px;top:1430px;" width="29" height="30" viewBox="0 0 29 30"><rect x="1" y="1" width="27" height="28" rx="5.5" fill="rgba(232,236,240,.88)" stroke="#f4f6f8" stroke-width="1.4"/><path d="M10 8V22L21 15Z" fill="#7088aa"/></svg>
<div style="top:1425.0px;height:36px;line-height:36px;font-size:24px;color:#f4f6f8;white-space:nowrap;letter-spacing:0.9px;left:361px;text-shadow:0 1px 3px rgba(0,0,0,.55);">My Video-highlight</div>
<svg style="left:1252px;top:1430px;" width="32" height="31" viewBox="0 0 32 31"><rect x="1.2" y="1.2" width="29.6" height="28.6" rx="6" fill="#f4f6f8" stroke="#8fa0b4" stroke-width="1"/><path d="M5 11V20" stroke="#6d8098" stroke-width="1.6"/><path d="M9.5 9H19Q21.5 9 21.5 11.5V13.2L26.5 10.5V20.5L21.5 17.8V19.5Q21.5 22 19 22H9.5Q7 22 7 19.5V11.5Q7 9 9.5 9Z" fill="#6d8098"/><path d="M12 12.2V18.8L17.5 15.5Z" fill="#f4f6f8"/></svg>
<div style="top:1427.0px;height:36px;line-height:36px;font-size:24px;color:#f4f6f8;white-space:nowrap;left:1294px;text-shadow:0 1px 3px rgba(0,0,0,.55);">多机位片段 1</div>
<svg style="left:1778px;top:1430px;" width="32" height="31" viewBox="0 0 32 31"><rect x="1.2" y="1.2" width="29.6" height="28.6" rx="6" fill="#f4f6f8" stroke="#8fa0b4" stroke-width="1"/><path d="M5 11V20" stroke="#6d8098" stroke-width="1.6"/><path d="M9.5 9H19Q21.5 9 21.5 11.5V13.2L26.5 10.5V20.5L21.5 17.8V19.5Q21.5 22 19 22H9.5Q7 22 7 19.5V11.5Q7 9 9.5 9Z" fill="#6d8098"/><path d="M12 12.2V18.8L17.5 15.5Z" fill="#f4f6f8"/></svg>
<div style="top:1427.0px;height:36px;line-height:36px;font-size:24px;color:#f4f6f8;white-space:nowrap;left:1819px;text-shadow:0 1px 3px rgba(0,0,0,.55);">多机位片段 1</div>
<div style="left:2264px;top:1130px;width:24px;height:270px;border-radius:12px;background:#48505a;"></div>
<div style="left:297px;top:1587px;width:1026px;height:23px;border-radius:11px 11px 0 0;background:#434a54;"></div>
<div style="left:297px;top:1588px;width:21px;height:21px;border-radius:50%;background:#6a717b;border:2.5px solid #b4b9c0;"></div>
<div style="left:1299px;top:1588px;width:21px;height:21px;border-radius:50%;background:#6a717b;border:2.5px solid #b4b9c0;"></div>
<div style="left:1760px;top:1052px;width:4px;height:558px;background:#fb6162;"></div>
<svg style="left:1750px;top:1050px;" width="24" height="24" viewBox="0 0 24 24"><path d="M0 0H24V10Q24 13 21.5 15L12 23.5L2.5 15Q0 13 0 10Z" fill="#fb6162"/></svg>
<div style="left:1740px;top:1184.5px;width:43.5px;height:69.5px;border-radius:22px;background:#fb6162;"></div>
<svg style="left:1747px;top:1200px;" width="30" height="38" viewBox="0 0 30 38"><g fill="none" stroke="#fff" stroke-width="1.9" stroke-linecap="round"><path d="M23.5 3.5L10.8 23.8"/><circle cx="7.3" cy="28.4" r="5.7"/><path d="M6.5 3.5L19.2 23.8"/><circle cx="22.7" cy="28.4" r="5.7"/></g></svg>
</div>
</body></html>
